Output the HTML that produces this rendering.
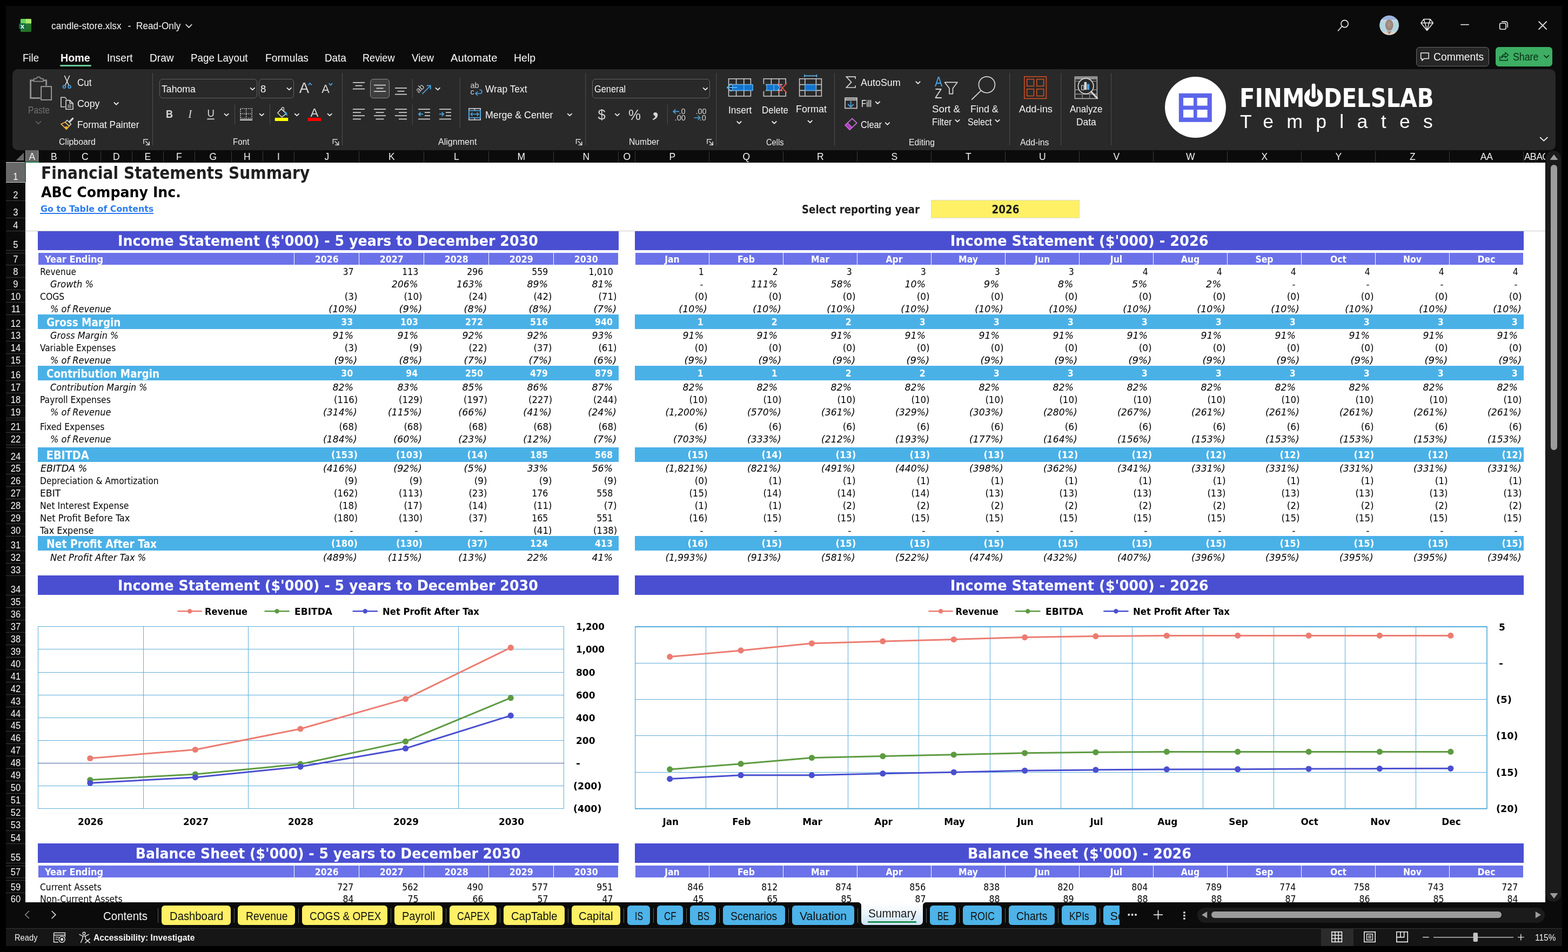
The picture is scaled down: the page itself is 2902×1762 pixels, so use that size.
<!DOCTYPE html>
<html lang="en"><head><meta charset="utf-8"><title>candle-store.xlsx - Excel</title>
<style>
html,body{margin:0;padding:0;background:#000;}
body{width:2902px;height:1762px;position:relative;overflow:hidden;font-family:"Liberation Sans",sans-serif;}
#app div,#app svg{position:absolute;}
#app div{white-space:nowrap;}
#app svg{overflow:visible;}
#app .v{font-family:"DejaVu Sans","Liberation Sans",sans-serif;}
#app .s{font-family:"Liberation Serif",serif;}
#app .d{font-family:"DejaVu Sans Condensed","DejaVu Sans","Liberation Sans",sans-serif;}
#app{position:absolute;left:0;top:0;width:2902px;height:1762px;overflow:hidden;background:#000;will-change:transform;}
#sheet{left:0;top:0;width:2860px;height:1670px;overflow:hidden;}
</style></head>
<body><div id="app">
<div style="left:11px;top:11px;width:2880px;height:1740px;background:#0b0b0b;"></div>
<div style="left:95.30px;top:39.00px;font-size:18.2px;line-height:18.2px;color:#f5f5f5;transform:scaleX(0.9491);transform-origin:left center;">candle-store.xlsx</div>
<div style="left:236.50px;top:39.00px;font-size:18.2px;line-height:18.2px;color:#f5f5f5;">-</div>
<div style="left:252.40px;top:39.00px;font-size:18.2px;line-height:18.2px;color:#f5f5f5;transform:scaleX(0.9472);transform-origin:left center;">Read-Only</div>
<div style="left:2621px;top:87px;width:135px;height:36px;background:#262626;border:1px solid #686868;border-radius:6px;box-sizing:border-box;"></div>
<div style="left:2652.60px;top:96.00px;font-size:19.4px;line-height:19.4px;color:#f5f5f5;transform:scaleX(0.9937);transform-origin:left center;">Comments</div>
<div style="left:2768px;top:87px;width:105px;height:36px;background:#3dae63;border-radius:6px;"></div>
<div style="left:2800.00px;top:96.00px;font-size:19.4px;line-height:19.4px;color:#0c2c17;transform:scaleX(0.9156);transform-origin:left center;">Share</div>
<div style="left:41.80px;top:97.00px;font-size:20.4px;line-height:20.4px;color:#fbfbfb;transform:scaleX(0.9126);transform-origin:left center;">File</div>
<div style="left:111.60px;top:97.00px;font-size:20.4px;line-height:20.4px;color:#fbfbfb;font-weight:700;transform:scaleX(0.9669);transform-origin:left center;">Home</div>
<div style="left:198.00px;top:97.00px;font-size:20.4px;line-height:20.4px;color:#fbfbfb;transform:scaleX(0.9310);transform-origin:left center;">Insert</div>
<div style="left:277.20px;top:97.00px;font-size:20.4px;line-height:20.4px;color:#fbfbfb;transform:scaleX(0.9369);transform-origin:left center;">Draw</div>
<div style="left:353.00px;top:97.00px;font-size:20.4px;line-height:20.4px;color:#fbfbfb;transform:scaleX(0.9218);transform-origin:left center;">Page Layout</div>
<div style="left:491.00px;top:97.00px;font-size:20.4px;line-height:20.4px;color:#fbfbfb;transform:scaleX(0.9410);transform-origin:left center;">Formulas</div>
<div style="left:600.60px;top:97.00px;font-size:20.4px;line-height:20.4px;color:#fbfbfb;transform:scaleX(0.9236);transform-origin:left center;">Data</div>
<div style="left:670.90px;top:97.00px;font-size:20.4px;line-height:20.4px;color:#fbfbfb;transform:scaleX(0.8910);transform-origin:left center;">Review</div>
<div style="left:761.80px;top:97.00px;font-size:20.4px;line-height:20.4px;color:#fbfbfb;transform:scaleX(0.9350);transform-origin:left center;">View</div>
<div style="left:834.00px;top:97.00px;font-size:20.4px;line-height:20.4px;color:#fbfbfb;transform:scaleX(0.9906);transform-origin:left center;">Automate</div>
<div style="left:950.90px;top:97.00px;font-size:20.4px;line-height:20.4px;color:#fbfbfb;transform:scaleX(0.9558);transform-origin:left center;">Help</div>
<div style="left:111px;top:120px;width:58px;height:3.2px;background:#67c796;border-radius:2px;"></div>
<div id="sheet"><div style="left:47px;top:301px;width:2813px;height:1369px;background:#fff;"></div>
<div style="left:47px;top:427px;width:2813px;height:1px;background:#c9c9c9;"></div>
<div class="d" style="left:76.20px;top:305.00px;font-size:31.7px;line-height:31.7px;color:#1f1f1f;font-weight:700;transform:scaleX(0.9887);transform-origin:left center;">Financial Statements Summary</div>
<div class="d" style="left:76.40px;top:344.00px;font-size:25.9px;line-height:25.9px;color:#000;font-weight:700;transform:scaleX(1.0855);transform-origin:left center;">ABC Company Inc.</div>
<div class="d" style="left:74.60px;top:378.00px;font-size:16.7px;line-height:16.7px;color:#2b7cf0;font-weight:700;transform:scaleX(1.0549);transform-origin:left center;">Go to Table of Contents</div>
<div style="left:74.4px;top:394px;width:209.8px;height:2px;background:#2b7cf0;"></div>
<div class="d" style="left:1483.60px;top:377.00px;font-size:21.6px;line-height:21.6px;color:#1f1f1f;font-weight:700;transform:scaleX(0.9348);transform-origin:left center;">Select reporting year</div>
<div style="left:1723px;top:370px;width:275px;height:34px;background:#fff066;border:1px solid #d9d9d9;box-sizing:border-box;"></div>
<div class="d" style="left:1833.96px;top:377.00px;font-size:21.6px;line-height:21.6px;color:#1a1a1a;font-weight:700;transform:scaleX(0.9430);transform-origin:center center;">2026</div>
<div style="left:70px;top:428px;width:1075px;height:35px;background:#4a4fd2;"></div>
<div style="left:1175px;top:428px;width:1645px;height:35px;background:#4a4fd2;"></div>
<div class="d" style="left:240.28px;top:433.00px;font-size:26.6px;line-height:26.6px;color:#fff;font-weight:700;transform:scaleX(1.0599);transform-origin:center center;">Income Statement ($'000) - 5 years to December 2030</div>
<div class="d" style="left:1775.23px;top:433.00px;font-size:26.6px;line-height:26.6px;color:#fff;font-weight:700;transform:scaleX(1.0729);transform-origin:center center;">Income Statement ($'000) - 2026</div>
<div style="left:70px;top:1065.4px;width:1075px;height:35.6px;background:#4a4fd2;"></div>
<div style="left:1175px;top:1065.4px;width:1645px;height:35.6px;background:#4a4fd2;"></div>
<div class="d" style="left:240.28px;top:1071.00px;font-size:26.6px;line-height:26.6px;color:#fff;font-weight:700;transform:scaleX(1.0599);transform-origin:center center;">Income Statement ($'000) - 5 years to December 2030</div>
<div class="d" style="left:1775.23px;top:1071.00px;font-size:26.6px;line-height:26.6px;color:#fff;font-weight:700;transform:scaleX(1.0729);transform-origin:center center;">Income Statement ($'000) - 2026</div>
<div style="left:70px;top:1561.4px;width:1075px;height:35.6px;background:#4a4fd2;"></div>
<div style="left:1175px;top:1561.4px;width:1645px;height:35.6px;background:#4a4fd2;"></div>
<div class="d" style="left:268.04px;top:1567.00px;font-size:26.6px;line-height:26.6px;color:#fff;font-weight:700;transform:scaleX(1.0508);transform-origin:center center;">Balance Sheet ($'000) - 5 years to December 2030</div>
<div class="d" style="left:1802.99px;top:1567.00px;font-size:26.6px;line-height:26.6px;color:#fff;font-weight:700;transform:scaleX(1.0615);transform-origin:center center;">Balance Sheet ($'000) - 2026</div>
<div style="left:71px;top:468px;width:473px;height:22px;background:#6b72e9;"></div>
<div class="d" style="left:82.50px;top:472.00px;font-size:17.4px;line-height:17.4px;color:#fff;font-weight:700;transform:scaleX(1.0300);transform-origin:left center;">Year Ending</div>
<div style="left:545px;top:468px;width:119px;height:22px;background:#6b72e9;"></div>
<div class="d" style="left:583.32px;top:472.00px;font-size:17.4px;line-height:17.4px;color:#fff;font-weight:700;transform:scaleX(1.0099);transform-origin:center center;">2026</div>
<div style="left:665px;top:468px;width:119px;height:22px;background:#6b72e9;"></div>
<div class="d" style="left:703.32px;top:472.00px;font-size:17.4px;line-height:17.4px;color:#fff;font-weight:700;transform:scaleX(1.0099);transform-origin:center center;">2027</div>
<div style="left:785px;top:468px;width:119px;height:22px;background:#6b72e9;"></div>
<div class="d" style="left:823.32px;top:472.00px;font-size:17.4px;line-height:17.4px;color:#fff;font-weight:700;transform:scaleX(1.0099);transform-origin:center center;">2028</div>
<div style="left:905px;top:468px;width:119px;height:22px;background:#6b72e9;"></div>
<div class="d" style="left:943.32px;top:472.00px;font-size:17.4px;line-height:17.4px;color:#fff;font-weight:700;transform:scaleX(1.0099);transform-origin:center center;">2029</div>
<div style="left:1025px;top:468px;width:119px;height:22px;background:#6b72e9;"></div>
<div class="d" style="left:1063.32px;top:472.00px;font-size:17.4px;line-height:17.4px;color:#fff;font-weight:700;transform:scaleX(1.0099);transform-origin:center center;">2030</div>
<div style="left:1176px;top:468px;width:135.5px;height:22px;background:#6b72e9;"></div>
<div class="d" style="left:1230.24px;top:472.00px;font-size:17.4px;line-height:17.4px;color:#fff;font-weight:700;">Jan</div>
<div style="left:1313px;top:468px;width:135.5px;height:22px;background:#6b72e9;"></div>
<div class="d" style="left:1365.09px;top:472.00px;font-size:17.4px;line-height:17.4px;color:#fff;font-weight:700;">Feb</div>
<div style="left:1450px;top:468px;width:135.5px;height:22px;background:#6b72e9;"></div>
<div class="d" style="left:1501.07px;top:472.00px;font-size:17.4px;line-height:17.4px;color:#fff;font-weight:700;">Mar</div>
<div style="left:1587px;top:468px;width:135.5px;height:22px;background:#6b72e9;"></div>
<div class="d" style="left:1639.48px;top:472.00px;font-size:17.4px;line-height:17.4px;color:#fff;font-weight:700;">Apr</div>
<div style="left:1724px;top:468px;width:135.5px;height:22px;background:#6b72e9;"></div>
<div class="d" style="left:1774.09px;top:472.00px;font-size:17.4px;line-height:17.4px;color:#fff;font-weight:700;">May</div>
<div style="left:1861px;top:468px;width:135.5px;height:22px;background:#6b72e9;"></div>
<div class="d" style="left:1914.94px;top:472.00px;font-size:17.4px;line-height:17.4px;color:#fff;font-weight:700;">Jun</div>
<div style="left:1998px;top:468px;width:135.5px;height:22px;background:#6b72e9;"></div>
<div class="d" style="left:2054.84px;top:472.00px;font-size:17.4px;line-height:17.4px;color:#fff;font-weight:700;">Jul</div>
<div style="left:2135px;top:468px;width:135.5px;height:22px;background:#6b72e9;"></div>
<div class="d" style="left:2185.77px;top:472.00px;font-size:17.4px;line-height:17.4px;color:#fff;font-weight:700;">Aug</div>
<div style="left:2272px;top:468px;width:135.5px;height:22px;background:#6b72e9;"></div>
<div class="d" style="left:2323.45px;top:472.00px;font-size:17.4px;line-height:17.4px;color:#fff;font-weight:700;">Sep</div>
<div style="left:2409px;top:468px;width:135.5px;height:22px;background:#6b72e9;"></div>
<div class="d" style="left:2461.97px;top:472.00px;font-size:17.4px;line-height:17.4px;color:#fff;font-weight:700;">Oct</div>
<div style="left:2546px;top:468px;width:135.5px;height:22px;background:#6b72e9;"></div>
<div class="d" style="left:2596.97px;top:472.00px;font-size:17.4px;line-height:17.4px;color:#fff;font-weight:700;">Nov</div>
<div style="left:2683px;top:468px;width:135.5px;height:22px;background:#6b72e9;"></div>
<div class="d" style="left:2734.55px;top:472.00px;font-size:17.4px;line-height:17.4px;color:#fff;font-weight:700;">Dec</div>
<div style="left:71px;top:1602px;width:473px;height:22px;background:#6b72e9;"></div>
<div class="d" style="left:82.50px;top:1606.00px;font-size:17.4px;line-height:17.4px;color:#fff;font-weight:700;transform:scaleX(1.0300);transform-origin:left center;">Year Ending</div>
<div style="left:545px;top:1602px;width:119px;height:22px;background:#6b72e9;"></div>
<div class="d" style="left:583.32px;top:1606.00px;font-size:17.4px;line-height:17.4px;color:#fff;font-weight:700;transform:scaleX(1.0099);transform-origin:center center;">2026</div>
<div style="left:665px;top:1602px;width:119px;height:22px;background:#6b72e9;"></div>
<div class="d" style="left:703.32px;top:1606.00px;font-size:17.4px;line-height:17.4px;color:#fff;font-weight:700;transform:scaleX(1.0099);transform-origin:center center;">2027</div>
<div style="left:785px;top:1602px;width:119px;height:22px;background:#6b72e9;"></div>
<div class="d" style="left:823.32px;top:1606.00px;font-size:17.4px;line-height:17.4px;color:#fff;font-weight:700;transform:scaleX(1.0099);transform-origin:center center;">2028</div>
<div style="left:905px;top:1602px;width:119px;height:22px;background:#6b72e9;"></div>
<div class="d" style="left:943.32px;top:1606.00px;font-size:17.4px;line-height:17.4px;color:#fff;font-weight:700;transform:scaleX(1.0099);transform-origin:center center;">2029</div>
<div style="left:1025px;top:1602px;width:119px;height:22px;background:#6b72e9;"></div>
<div class="d" style="left:1063.32px;top:1606.00px;font-size:17.4px;line-height:17.4px;color:#fff;font-weight:700;transform:scaleX(1.0099);transform-origin:center center;">2030</div>
<div style="left:1176px;top:1602px;width:135.5px;height:22px;background:#6b72e9;"></div>
<div class="d" style="left:1230.24px;top:1606.00px;font-size:17.4px;line-height:17.4px;color:#fff;font-weight:700;">Jan</div>
<div style="left:1313px;top:1602px;width:135.5px;height:22px;background:#6b72e9;"></div>
<div class="d" style="left:1365.09px;top:1606.00px;font-size:17.4px;line-height:17.4px;color:#fff;font-weight:700;">Feb</div>
<div style="left:1450px;top:1602px;width:135.5px;height:22px;background:#6b72e9;"></div>
<div class="d" style="left:1501.07px;top:1606.00px;font-size:17.4px;line-height:17.4px;color:#fff;font-weight:700;">Mar</div>
<div style="left:1587px;top:1602px;width:135.5px;height:22px;background:#6b72e9;"></div>
<div class="d" style="left:1639.48px;top:1606.00px;font-size:17.4px;line-height:17.4px;color:#fff;font-weight:700;">Apr</div>
<div style="left:1724px;top:1602px;width:135.5px;height:22px;background:#6b72e9;"></div>
<div class="d" style="left:1774.09px;top:1606.00px;font-size:17.4px;line-height:17.4px;color:#fff;font-weight:700;">May</div>
<div style="left:1861px;top:1602px;width:135.5px;height:22px;background:#6b72e9;"></div>
<div class="d" style="left:1914.94px;top:1606.00px;font-size:17.4px;line-height:17.4px;color:#fff;font-weight:700;">Jun</div>
<div style="left:1998px;top:1602px;width:135.5px;height:22px;background:#6b72e9;"></div>
<div class="d" style="left:2054.84px;top:1606.00px;font-size:17.4px;line-height:17.4px;color:#fff;font-weight:700;">Jul</div>
<div style="left:2135px;top:1602px;width:135.5px;height:22px;background:#6b72e9;"></div>
<div class="d" style="left:2185.77px;top:1606.00px;font-size:17.4px;line-height:17.4px;color:#fff;font-weight:700;">Aug</div>
<div style="left:2272px;top:1602px;width:135.5px;height:22px;background:#6b72e9;"></div>
<div class="d" style="left:2323.45px;top:1606.00px;font-size:17.4px;line-height:17.4px;color:#fff;font-weight:700;">Sep</div>
<div style="left:2409px;top:1602px;width:135.5px;height:22px;background:#6b72e9;"></div>
<div class="d" style="left:2461.97px;top:1606.00px;font-size:17.4px;line-height:17.4px;color:#fff;font-weight:700;">Oct</div>
<div style="left:2546px;top:1602px;width:135.5px;height:22px;background:#6b72e9;"></div>
<div class="d" style="left:2596.97px;top:1606.00px;font-size:17.4px;line-height:17.4px;color:#fff;font-weight:700;">Nov</div>
<div style="left:2683px;top:1602px;width:135.5px;height:22px;background:#6b72e9;"></div>
<div class="d" style="left:2734.55px;top:1606.00px;font-size:17.4px;line-height:17.4px;color:#fff;font-weight:700;">Dec</div>
<div class="d" style="left:74.25px;top:495.00px;font-size:17px;line-height:17px;color:#000;">Revenue</div>
<div class="d" style="left:634.94px;top:495.00px;font-size:17px;line-height:17px;color:#000;transform:scaleX(1.0279);transform-origin:right center;">37</div>
<div class="d" style="left:745.21px;top:495.00px;font-size:17px;line-height:17px;color:#000;transform:scaleX(1.0279);transform-origin:right center;">113</div>
<div class="d" style="left:865.21px;top:495.00px;font-size:17px;line-height:17px;color:#000;transform:scaleX(1.0279);transform-origin:right center;">296</div>
<div class="d" style="left:985.21px;top:495.00px;font-size:17px;line-height:17px;color:#000;transform:scaleX(1.0279);transform-origin:right center;">559</div>
<div class="d" style="left:1090.63px;top:495.00px;font-size:17px;line-height:17px;color:#000;transform:scaleX(1.0327);transform-origin:right center;">1,010</div>
<div class="d" style="left:1292.67px;top:495.00px;font-size:17px;line-height:17px;color:#000;transform:scaleX(1.0279);transform-origin:right center;">1</div>
<div class="d" style="left:1429.67px;top:495.00px;font-size:17px;line-height:17px;color:#000;transform:scaleX(1.0279);transform-origin:right center;">2</div>
<div class="d" style="left:1566.67px;top:495.00px;font-size:17px;line-height:17px;color:#000;transform:scaleX(1.0279);transform-origin:right center;">3</div>
<div class="d" style="left:1703.67px;top:495.00px;font-size:17px;line-height:17px;color:#000;transform:scaleX(1.0279);transform-origin:right center;">3</div>
<div class="d" style="left:1840.67px;top:495.00px;font-size:17px;line-height:17px;color:#000;transform:scaleX(1.0279);transform-origin:right center;">3</div>
<div class="d" style="left:1977.67px;top:495.00px;font-size:17px;line-height:17px;color:#000;transform:scaleX(1.0279);transform-origin:right center;">3</div>
<div class="d" style="left:2114.67px;top:495.00px;font-size:17px;line-height:17px;color:#000;transform:scaleX(1.0279);transform-origin:right center;">4</div>
<div class="d" style="left:2251.67px;top:495.00px;font-size:17px;line-height:17px;color:#000;transform:scaleX(1.0279);transform-origin:right center;">4</div>
<div class="d" style="left:2388.67px;top:495.00px;font-size:17px;line-height:17px;color:#000;transform:scaleX(1.0279);transform-origin:right center;">4</div>
<div class="d" style="left:2525.67px;top:495.00px;font-size:17px;line-height:17px;color:#000;transform:scaleX(1.0279);transform-origin:right center;">4</div>
<div class="d" style="left:2662.67px;top:495.00px;font-size:17px;line-height:17px;color:#000;transform:scaleX(1.0279);transform-origin:right center;">4</div>
<div class="d" style="left:2799.67px;top:495.00px;font-size:17px;line-height:17px;color:#000;transform:scaleX(1.0279);transform-origin:right center;">4</div>
<div class="d" style="left:92.50px;top:518.00px;font-size:17px;line-height:17px;color:#000;font-style:italic;transform:scaleX(1.0655);transform-origin:left center;">Growth %</div>

<div class="d" style="left:729.78px;top:518.00px;font-size:17px;line-height:17px;color:#000;font-style:italic;transform:scaleX(1.1116);transform-origin:right center;">206%</div>
<div class="d" style="left:849.78px;top:518.00px;font-size:17px;line-height:17px;color:#000;font-style:italic;transform:scaleX(1.1116);transform-origin:right center;">163%</div>
<div class="d" style="left:979.51px;top:518.00px;font-size:17px;line-height:17px;color:#000;font-style:italic;transform:scaleX(1.1356);transform-origin:right center;">89%</div>
<div class="d" style="left:1099.51px;top:518.00px;font-size:17px;line-height:17px;color:#000;font-style:italic;transform:scaleX(1.1356);transform-origin:right center;">81%</div>
<div class="d" style="left:1295.58px;top:518.00px;font-size:17px;line-height:17px;color:#000;font-style:italic;transform:scaleX(1.1413);transform-origin:right center;">-</div>
<div class="d" style="left:1394.78px;top:518.00px;font-size:17px;line-height:17px;color:#000;font-style:italic;transform:scaleX(1.1116);transform-origin:right center;">111%</div>
<div class="d" style="left:1541.51px;top:518.00px;font-size:17px;line-height:17px;color:#000;font-style:italic;transform:scaleX(1.1356);transform-origin:right center;">58%</div>
<div class="d" style="left:1678.51px;top:518.00px;font-size:17px;line-height:17px;color:#000;font-style:italic;transform:scaleX(1.1356);transform-origin:right center;">10%</div>
<div class="d" style="left:1825.24px;top:518.00px;font-size:17px;line-height:17px;color:#000;font-style:italic;transform:scaleX(1.1787);transform-origin:right center;">9%</div>
<div class="d" style="left:1962.24px;top:518.00px;font-size:17px;line-height:17px;color:#000;font-style:italic;transform:scaleX(1.1787);transform-origin:right center;">8%</div>
<div class="d" style="left:2099.24px;top:518.00px;font-size:17px;line-height:17px;color:#000;font-style:italic;transform:scaleX(1.1787);transform-origin:right center;">5%</div>
<div class="d" style="left:2236.24px;top:518.00px;font-size:17px;line-height:17px;color:#000;font-style:italic;transform:scaleX(1.1787);transform-origin:right center;">2%</div>
<div class="d" style="left:2391.58px;top:518.00px;font-size:17px;line-height:17px;color:#000;font-style:italic;transform:scaleX(1.1413);transform-origin:right center;">-</div>
<div class="d" style="left:2528.58px;top:518.00px;font-size:17px;line-height:17px;color:#000;font-style:italic;transform:scaleX(1.1413);transform-origin:right center;">-</div>
<div class="d" style="left:2665.58px;top:518.00px;font-size:17px;line-height:17px;color:#000;font-style:italic;transform:scaleX(1.1413);transform-origin:right center;">-</div>
<div class="d" style="left:2802.58px;top:518.00px;font-size:17px;line-height:17px;color:#000;font-style:italic;transform:scaleX(1.1413);transform-origin:right center;">-</div>
<div class="d" style="left:74.25px;top:541.00px;font-size:17px;line-height:17px;color:#000;transform:scaleX(1.0218);transform-origin:left center;">COGS</div>
<div class="d" style="left:640.13px;top:541.00px;font-size:17px;line-height:17px;color:#000;transform:scaleX(1.1078);transform-origin:right center;">(3)</div>
<div class="d" style="left:750.41px;top:541.00px;font-size:17px;line-height:17px;color:#000;transform:scaleX(1.0830);transform-origin:right center;">(10)</div>
<div class="d" style="left:870.41px;top:541.00px;font-size:17px;line-height:17px;color:#000;transform:scaleX(1.0830);transform-origin:right center;">(24)</div>
<div class="d" style="left:990.41px;top:541.00px;font-size:17px;line-height:17px;color:#000;transform:scaleX(1.0830);transform-origin:right center;">(42)</div>
<div class="d" style="left:1110.41px;top:541.00px;font-size:17px;line-height:17px;color:#000;transform:scaleX(1.0830);transform-origin:right center;">(71)</div>
<div class="d" style="left:1288.13px;top:541.00px;font-size:17px;line-height:17px;color:#000;transform:scaleX(1.1078);transform-origin:right center;">(0)</div>
<div class="d" style="left:1425.13px;top:541.00px;font-size:17px;line-height:17px;color:#000;transform:scaleX(1.1078);transform-origin:right center;">(0)</div>
<div class="d" style="left:1562.13px;top:541.00px;font-size:17px;line-height:17px;color:#000;transform:scaleX(1.1078);transform-origin:right center;">(0)</div>
<div class="d" style="left:1699.13px;top:541.00px;font-size:17px;line-height:17px;color:#000;transform:scaleX(1.1078);transform-origin:right center;">(0)</div>
<div class="d" style="left:1836.13px;top:541.00px;font-size:17px;line-height:17px;color:#000;transform:scaleX(1.1078);transform-origin:right center;">(0)</div>
<div class="d" style="left:1973.13px;top:541.00px;font-size:17px;line-height:17px;color:#000;transform:scaleX(1.1078);transform-origin:right center;">(0)</div>
<div class="d" style="left:2110.13px;top:541.00px;font-size:17px;line-height:17px;color:#000;transform:scaleX(1.1078);transform-origin:right center;">(0)</div>
<div class="d" style="left:2247.13px;top:541.00px;font-size:17px;line-height:17px;color:#000;transform:scaleX(1.1078);transform-origin:right center;">(0)</div>
<div class="d" style="left:2384.13px;top:541.00px;font-size:17px;line-height:17px;color:#000;transform:scaleX(1.1078);transform-origin:right center;">(0)</div>
<div class="d" style="left:2521.13px;top:541.00px;font-size:17px;line-height:17px;color:#000;transform:scaleX(1.1078);transform-origin:right center;">(0)</div>
<div class="d" style="left:2658.13px;top:541.00px;font-size:17px;line-height:17px;color:#000;transform:scaleX(1.1078);transform-origin:right center;">(0)</div>
<div class="d" style="left:2795.13px;top:541.00px;font-size:17px;line-height:17px;color:#000;transform:scaleX(1.1078);transform-origin:right center;">(0)</div>
<div class="d" style="left:93.00px;top:564.00px;font-size:17px;line-height:17px;color:#000;font-style:italic;transform:scaleX(1.0585);transform-origin:left center;">% of Revenue</div>
<div class="d" style="left:614.87px;top:564.00px;font-size:17px;line-height:17px;color:#000;font-style:italic;transform:scaleX(1.1453);transform-origin:right center;">(10%)</div>
<div class="d" style="left:744.60px;top:564.00px;font-size:17px;line-height:17px;color:#000;font-style:italic;transform:scaleX(1.1768);transform-origin:right center;">(9%)</div>
<div class="d" style="left:864.60px;top:564.00px;font-size:17px;line-height:17px;color:#000;font-style:italic;transform:scaleX(1.1768);transform-origin:right center;">(8%)</div>
<div class="d" style="left:984.60px;top:564.00px;font-size:17px;line-height:17px;color:#000;font-style:italic;transform:scaleX(1.1768);transform-origin:right center;">(8%)</div>
<div class="d" style="left:1104.60px;top:564.00px;font-size:17px;line-height:17px;color:#000;font-style:italic;transform:scaleX(1.1768);transform-origin:right center;">(7%)</div>
<div class="d" style="left:1262.87px;top:564.00px;font-size:17px;line-height:17px;color:#000;font-style:italic;transform:scaleX(1.1453);transform-origin:right center;">(10%)</div>
<div class="d" style="left:1399.87px;top:564.00px;font-size:17px;line-height:17px;color:#000;font-style:italic;transform:scaleX(1.1453);transform-origin:right center;">(10%)</div>
<div class="d" style="left:1536.87px;top:564.00px;font-size:17px;line-height:17px;color:#000;font-style:italic;transform:scaleX(1.1453);transform-origin:right center;">(10%)</div>
<div class="d" style="left:1673.87px;top:564.00px;font-size:17px;line-height:17px;color:#000;font-style:italic;transform:scaleX(1.1453);transform-origin:right center;">(10%)</div>
<div class="d" style="left:1810.87px;top:564.00px;font-size:17px;line-height:17px;color:#000;font-style:italic;transform:scaleX(1.1453);transform-origin:right center;">(10%)</div>
<div class="d" style="left:1947.87px;top:564.00px;font-size:17px;line-height:17px;color:#000;font-style:italic;transform:scaleX(1.1453);transform-origin:right center;">(10%)</div>
<div class="d" style="left:2084.87px;top:564.00px;font-size:17px;line-height:17px;color:#000;font-style:italic;transform:scaleX(1.1453);transform-origin:right center;">(10%)</div>
<div class="d" style="left:2221.87px;top:564.00px;font-size:17px;line-height:17px;color:#000;font-style:italic;transform:scaleX(1.1453);transform-origin:right center;">(10%)</div>
<div class="d" style="left:2358.87px;top:564.00px;font-size:17px;line-height:17px;color:#000;font-style:italic;transform:scaleX(1.1453);transform-origin:right center;">(10%)</div>
<div class="d" style="left:2495.87px;top:564.00px;font-size:17px;line-height:17px;color:#000;font-style:italic;transform:scaleX(1.1453);transform-origin:right center;">(10%)</div>
<div class="d" style="left:2632.87px;top:564.00px;font-size:17px;line-height:17px;color:#000;font-style:italic;transform:scaleX(1.1453);transform-origin:right center;">(10%)</div>
<div class="d" style="left:2769.87px;top:564.00px;font-size:17px;line-height:17px;color:#000;font-style:italic;transform:scaleX(1.1453);transform-origin:right center;">(10%)</div>
<div style="left:70px;top:582px;width:1075px;height:27px;background:#4ab1e7;"></div>
<div style="left:1175px;top:582px;width:1645px;height:27px;background:#4ab1e7;"></div>
<div class="d" style="left:85.75px;top:586.00px;font-size:21.4px;line-height:21.4px;color:#fff;font-weight:700;transform:scaleX(0.9556);transform-origin:left center;">Gross Margin</div>
<div class="d" style="left:632.42px;top:588.00px;font-size:17px;line-height:17px;color:#fff;font-weight:700;transform:scaleX(1.0337);transform-origin:right center;">33</div>
<div class="d" style="left:741.77px;top:588.00px;font-size:17px;line-height:17px;color:#fff;font-weight:700;transform:scaleX(1.0337);transform-origin:right center;">103</div>
<div class="d" style="left:861.77px;top:588.00px;font-size:17px;line-height:17px;color:#fff;font-weight:700;transform:scaleX(1.0337);transform-origin:right center;">272</div>
<div class="d" style="left:981.77px;top:588.00px;font-size:17px;line-height:17px;color:#fff;font-weight:700;transform:scaleX(1.0337);transform-origin:right center;">516</div>
<div class="d" style="left:1101.77px;top:588.00px;font-size:17px;line-height:17px;color:#fff;font-weight:700;transform:scaleX(1.0337);transform-origin:right center;">940</div>
<div class="d" style="left:1291.06px;top:588.00px;font-size:17px;line-height:17px;color:#fff;font-weight:700;transform:scaleX(1.0337);transform-origin:right center;">1</div>
<div class="d" style="left:1428.06px;top:588.00px;font-size:17px;line-height:17px;color:#fff;font-weight:700;transform:scaleX(1.0337);transform-origin:right center;">2</div>
<div class="d" style="left:1565.06px;top:588.00px;font-size:17px;line-height:17px;color:#fff;font-weight:700;transform:scaleX(1.0337);transform-origin:right center;">2</div>
<div class="d" style="left:1702.06px;top:588.00px;font-size:17px;line-height:17px;color:#fff;font-weight:700;transform:scaleX(1.0337);transform-origin:right center;">3</div>
<div class="d" style="left:1839.06px;top:588.00px;font-size:17px;line-height:17px;color:#fff;font-weight:700;transform:scaleX(1.0337);transform-origin:right center;">3</div>
<div class="d" style="left:1976.06px;top:588.00px;font-size:17px;line-height:17px;color:#fff;font-weight:700;transform:scaleX(1.0337);transform-origin:right center;">3</div>
<div class="d" style="left:2113.06px;top:588.00px;font-size:17px;line-height:17px;color:#fff;font-weight:700;transform:scaleX(1.0337);transform-origin:right center;">3</div>
<div class="d" style="left:2250.06px;top:588.00px;font-size:17px;line-height:17px;color:#fff;font-weight:700;transform:scaleX(1.0337);transform-origin:right center;">3</div>
<div class="d" style="left:2387.06px;top:588.00px;font-size:17px;line-height:17px;color:#fff;font-weight:700;transform:scaleX(1.0337);transform-origin:right center;">3</div>
<div class="d" style="left:2524.06px;top:588.00px;font-size:17px;line-height:17px;color:#fff;font-weight:700;transform:scaleX(1.0337);transform-origin:right center;">3</div>
<div class="d" style="left:2661.06px;top:588.00px;font-size:17px;line-height:17px;color:#fff;font-weight:700;transform:scaleX(1.0337);transform-origin:right center;">3</div>
<div class="d" style="left:2798.06px;top:588.00px;font-size:17px;line-height:17px;color:#fff;font-weight:700;transform:scaleX(1.0337);transform-origin:right center;">3</div>
<div class="d" style="left:92.50px;top:613.00px;font-size:17px;line-height:17px;color:#000;font-style:italic;transform:scaleX(1.0504);transform-origin:left center;">Gross Margin %</div>
<div class="d" style="left:619.51px;top:613.00px;font-size:17px;line-height:17px;color:#000;font-style:italic;transform:scaleX(1.1356);transform-origin:right center;">91%</div>
<div class="d" style="left:739.51px;top:613.00px;font-size:17px;line-height:17px;color:#000;font-style:italic;transform:scaleX(1.1356);transform-origin:right center;">91%</div>
<div class="d" style="left:859.51px;top:613.00px;font-size:17px;line-height:17px;color:#000;font-style:italic;transform:scaleX(1.1356);transform-origin:right center;">92%</div>
<div class="d" style="left:979.51px;top:613.00px;font-size:17px;line-height:17px;color:#000;font-style:italic;transform:scaleX(1.1356);transform-origin:right center;">92%</div>
<div class="d" style="left:1099.51px;top:613.00px;font-size:17px;line-height:17px;color:#000;font-style:italic;transform:scaleX(1.1356);transform-origin:right center;">93%</div>
<div class="d" style="left:1267.51px;top:613.00px;font-size:17px;line-height:17px;color:#000;font-style:italic;transform:scaleX(1.1356);transform-origin:right center;">91%</div>
<div class="d" style="left:1404.51px;top:613.00px;font-size:17px;line-height:17px;color:#000;font-style:italic;transform:scaleX(1.1356);transform-origin:right center;">91%</div>
<div class="d" style="left:1541.51px;top:613.00px;font-size:17px;line-height:17px;color:#000;font-style:italic;transform:scaleX(1.1356);transform-origin:right center;">91%</div>
<div class="d" style="left:1678.51px;top:613.00px;font-size:17px;line-height:17px;color:#000;font-style:italic;transform:scaleX(1.1356);transform-origin:right center;">91%</div>
<div class="d" style="left:1815.51px;top:613.00px;font-size:17px;line-height:17px;color:#000;font-style:italic;transform:scaleX(1.1356);transform-origin:right center;">91%</div>
<div class="d" style="left:1952.51px;top:613.00px;font-size:17px;line-height:17px;color:#000;font-style:italic;transform:scaleX(1.1356);transform-origin:right center;">91%</div>
<div class="d" style="left:2089.51px;top:613.00px;font-size:17px;line-height:17px;color:#000;font-style:italic;transform:scaleX(1.1356);transform-origin:right center;">91%</div>
<div class="d" style="left:2226.51px;top:613.00px;font-size:17px;line-height:17px;color:#000;font-style:italic;transform:scaleX(1.1356);transform-origin:right center;">91%</div>
<div class="d" style="left:2363.51px;top:613.00px;font-size:17px;line-height:17px;color:#000;font-style:italic;transform:scaleX(1.1356);transform-origin:right center;">91%</div>
<div class="d" style="left:2500.51px;top:613.00px;font-size:17px;line-height:17px;color:#000;font-style:italic;transform:scaleX(1.1356);transform-origin:right center;">91%</div>
<div class="d" style="left:2637.51px;top:613.00px;font-size:17px;line-height:17px;color:#000;font-style:italic;transform:scaleX(1.1356);transform-origin:right center;">91%</div>
<div class="d" style="left:2774.51px;top:613.00px;font-size:17px;line-height:17px;color:#000;font-style:italic;transform:scaleX(1.1356);transform-origin:right center;">91%</div>
<div class="d" style="left:74.25px;top:636.00px;font-size:17px;line-height:17px;color:#000;transform:scaleX(1.0052);transform-origin:left center;">Variable Expenses</div>
<div class="d" style="left:640.13px;top:636.00px;font-size:17px;line-height:17px;color:#000;transform:scaleX(1.1078);transform-origin:right center;">(3)</div>
<div class="d" style="left:760.13px;top:636.00px;font-size:17px;line-height:17px;color:#000;transform:scaleX(1.1078);transform-origin:right center;">(9)</div>
<div class="d" style="left:870.41px;top:636.00px;font-size:17px;line-height:17px;color:#000;transform:scaleX(1.0830);transform-origin:right center;">(22)</div>
<div class="d" style="left:990.41px;top:636.00px;font-size:17px;line-height:17px;color:#000;transform:scaleX(1.0830);transform-origin:right center;">(37)</div>
<div class="d" style="left:1110.41px;top:636.00px;font-size:17px;line-height:17px;color:#000;transform:scaleX(1.0830);transform-origin:right center;">(61)</div>
<div class="d" style="left:1288.13px;top:636.00px;font-size:17px;line-height:17px;color:#000;transform:scaleX(1.1078);transform-origin:right center;">(0)</div>
<div class="d" style="left:1425.13px;top:636.00px;font-size:17px;line-height:17px;color:#000;transform:scaleX(1.1078);transform-origin:right center;">(0)</div>
<div class="d" style="left:1562.13px;top:636.00px;font-size:17px;line-height:17px;color:#000;transform:scaleX(1.1078);transform-origin:right center;">(0)</div>
<div class="d" style="left:1699.13px;top:636.00px;font-size:17px;line-height:17px;color:#000;transform:scaleX(1.1078);transform-origin:right center;">(0)</div>
<div class="d" style="left:1836.13px;top:636.00px;font-size:17px;line-height:17px;color:#000;transform:scaleX(1.1078);transform-origin:right center;">(0)</div>
<div class="d" style="left:1973.13px;top:636.00px;font-size:17px;line-height:17px;color:#000;transform:scaleX(1.1078);transform-origin:right center;">(0)</div>
<div class="d" style="left:2110.13px;top:636.00px;font-size:17px;line-height:17px;color:#000;transform:scaleX(1.1078);transform-origin:right center;">(0)</div>
<div class="d" style="left:2247.13px;top:636.00px;font-size:17px;line-height:17px;color:#000;transform:scaleX(1.1078);transform-origin:right center;">(0)</div>
<div class="d" style="left:2384.13px;top:636.00px;font-size:17px;line-height:17px;color:#000;transform:scaleX(1.1078);transform-origin:right center;">(0)</div>
<div class="d" style="left:2521.13px;top:636.00px;font-size:17px;line-height:17px;color:#000;transform:scaleX(1.1078);transform-origin:right center;">(0)</div>
<div class="d" style="left:2658.13px;top:636.00px;font-size:17px;line-height:17px;color:#000;transform:scaleX(1.1078);transform-origin:right center;">(0)</div>
<div class="d" style="left:2795.13px;top:636.00px;font-size:17px;line-height:17px;color:#000;transform:scaleX(1.1078);transform-origin:right center;">(0)</div>
<div class="d" style="left:93.00px;top:659.00px;font-size:17px;line-height:17px;color:#000;font-style:italic;transform:scaleX(1.0585);transform-origin:left center;">% of Revenue</div>
<div class="d" style="left:624.60px;top:659.00px;font-size:17px;line-height:17px;color:#000;font-style:italic;transform:scaleX(1.1768);transform-origin:right center;">(9%)</div>
<div class="d" style="left:744.60px;top:659.00px;font-size:17px;line-height:17px;color:#000;font-style:italic;transform:scaleX(1.1768);transform-origin:right center;">(8%)</div>
<div class="d" style="left:864.60px;top:659.00px;font-size:17px;line-height:17px;color:#000;font-style:italic;transform:scaleX(1.1768);transform-origin:right center;">(7%)</div>
<div class="d" style="left:984.60px;top:659.00px;font-size:17px;line-height:17px;color:#000;font-style:italic;transform:scaleX(1.1768);transform-origin:right center;">(7%)</div>
<div class="d" style="left:1104.60px;top:659.00px;font-size:17px;line-height:17px;color:#000;font-style:italic;transform:scaleX(1.1768);transform-origin:right center;">(6%)</div>
<div class="d" style="left:1272.60px;top:659.00px;font-size:17px;line-height:17px;color:#000;font-style:italic;transform:scaleX(1.1768);transform-origin:right center;">(9%)</div>
<div class="d" style="left:1409.60px;top:659.00px;font-size:17px;line-height:17px;color:#000;font-style:italic;transform:scaleX(1.1768);transform-origin:right center;">(9%)</div>
<div class="d" style="left:1546.60px;top:659.00px;font-size:17px;line-height:17px;color:#000;font-style:italic;transform:scaleX(1.1768);transform-origin:right center;">(9%)</div>
<div class="d" style="left:1683.60px;top:659.00px;font-size:17px;line-height:17px;color:#000;font-style:italic;transform:scaleX(1.1768);transform-origin:right center;">(9%)</div>
<div class="d" style="left:1820.60px;top:659.00px;font-size:17px;line-height:17px;color:#000;font-style:italic;transform:scaleX(1.1768);transform-origin:right center;">(9%)</div>
<div class="d" style="left:1957.60px;top:659.00px;font-size:17px;line-height:17px;color:#000;font-style:italic;transform:scaleX(1.1768);transform-origin:right center;">(9%)</div>
<div class="d" style="left:2094.60px;top:659.00px;font-size:17px;line-height:17px;color:#000;font-style:italic;transform:scaleX(1.1768);transform-origin:right center;">(9%)</div>
<div class="d" style="left:2231.60px;top:659.00px;font-size:17px;line-height:17px;color:#000;font-style:italic;transform:scaleX(1.1768);transform-origin:right center;">(9%)</div>
<div class="d" style="left:2368.60px;top:659.00px;font-size:17px;line-height:17px;color:#000;font-style:italic;transform:scaleX(1.1768);transform-origin:right center;">(9%)</div>
<div class="d" style="left:2505.60px;top:659.00px;font-size:17px;line-height:17px;color:#000;font-style:italic;transform:scaleX(1.1768);transform-origin:right center;">(9%)</div>
<div class="d" style="left:2642.60px;top:659.00px;font-size:17px;line-height:17px;color:#000;font-style:italic;transform:scaleX(1.1768);transform-origin:right center;">(9%)</div>
<div class="d" style="left:2779.60px;top:659.00px;font-size:17px;line-height:17px;color:#000;font-style:italic;transform:scaleX(1.1768);transform-origin:right center;">(9%)</div>
<div style="left:70px;top:677px;width:1075px;height:27px;background:#4ab1e7;"></div>
<div style="left:1175px;top:677px;width:1645px;height:27px;background:#4ab1e7;"></div>
<div class="d" style="left:85.75px;top:681.00px;font-size:21.4px;line-height:21.4px;color:#fff;font-weight:700;transform:scaleX(0.9554);transform-origin:left center;">Contribution Margin</div>
<div class="d" style="left:632.42px;top:683.00px;font-size:17px;line-height:17px;color:#fff;font-weight:700;transform:scaleX(1.0337);transform-origin:right center;">30</div>
<div class="d" style="left:752.42px;top:683.00px;font-size:17px;line-height:17px;color:#fff;font-weight:700;transform:scaleX(1.0337);transform-origin:right center;">94</div>
<div class="d" style="left:861.77px;top:683.00px;font-size:17px;line-height:17px;color:#fff;font-weight:700;transform:scaleX(1.0337);transform-origin:right center;">250</div>
<div class="d" style="left:981.77px;top:683.00px;font-size:17px;line-height:17px;color:#fff;font-weight:700;transform:scaleX(1.0337);transform-origin:right center;">479</div>
<div class="d" style="left:1101.77px;top:683.00px;font-size:17px;line-height:17px;color:#fff;font-weight:700;transform:scaleX(1.0337);transform-origin:right center;">879</div>
<div class="d" style="left:1291.06px;top:683.00px;font-size:17px;line-height:17px;color:#fff;font-weight:700;transform:scaleX(1.0337);transform-origin:right center;">1</div>
<div class="d" style="left:1428.06px;top:683.00px;font-size:17px;line-height:17px;color:#fff;font-weight:700;transform:scaleX(1.0337);transform-origin:right center;">1</div>
<div class="d" style="left:1565.06px;top:683.00px;font-size:17px;line-height:17px;color:#fff;font-weight:700;transform:scaleX(1.0337);transform-origin:right center;">2</div>
<div class="d" style="left:1702.06px;top:683.00px;font-size:17px;line-height:17px;color:#fff;font-weight:700;transform:scaleX(1.0337);transform-origin:right center;">2</div>
<div class="d" style="left:1839.06px;top:683.00px;font-size:17px;line-height:17px;color:#fff;font-weight:700;transform:scaleX(1.0337);transform-origin:right center;">3</div>
<div class="d" style="left:1976.06px;top:683.00px;font-size:17px;line-height:17px;color:#fff;font-weight:700;transform:scaleX(1.0337);transform-origin:right center;">3</div>
<div class="d" style="left:2113.06px;top:683.00px;font-size:17px;line-height:17px;color:#fff;font-weight:700;transform:scaleX(1.0337);transform-origin:right center;">3</div>
<div class="d" style="left:2250.06px;top:683.00px;font-size:17px;line-height:17px;color:#fff;font-weight:700;transform:scaleX(1.0337);transform-origin:right center;">3</div>
<div class="d" style="left:2387.06px;top:683.00px;font-size:17px;line-height:17px;color:#fff;font-weight:700;transform:scaleX(1.0337);transform-origin:right center;">3</div>
<div class="d" style="left:2524.06px;top:683.00px;font-size:17px;line-height:17px;color:#fff;font-weight:700;transform:scaleX(1.0337);transform-origin:right center;">3</div>
<div class="d" style="left:2661.06px;top:683.00px;font-size:17px;line-height:17px;color:#fff;font-weight:700;transform:scaleX(1.0337);transform-origin:right center;">3</div>
<div class="d" style="left:2798.06px;top:683.00px;font-size:17px;line-height:17px;color:#fff;font-weight:700;transform:scaleX(1.0337);transform-origin:right center;">3</div>
<div class="d" style="left:92.50px;top:709.00px;font-size:17px;line-height:17px;color:#000;font-style:italic;transform:scaleX(1.0453);transform-origin:left center;">Contribution Margin %</div>
<div class="d" style="left:619.51px;top:709.00px;font-size:17px;line-height:17px;color:#000;font-style:italic;transform:scaleX(1.1356);transform-origin:right center;">82%</div>
<div class="d" style="left:739.51px;top:709.00px;font-size:17px;line-height:17px;color:#000;font-style:italic;transform:scaleX(1.1356);transform-origin:right center;">83%</div>
<div class="d" style="left:859.51px;top:709.00px;font-size:17px;line-height:17px;color:#000;font-style:italic;transform:scaleX(1.1356);transform-origin:right center;">85%</div>
<div class="d" style="left:979.51px;top:709.00px;font-size:17px;line-height:17px;color:#000;font-style:italic;transform:scaleX(1.1356);transform-origin:right center;">86%</div>
<div class="d" style="left:1099.51px;top:709.00px;font-size:17px;line-height:17px;color:#000;font-style:italic;transform:scaleX(1.1356);transform-origin:right center;">87%</div>
<div class="d" style="left:1267.51px;top:709.00px;font-size:17px;line-height:17px;color:#000;font-style:italic;transform:scaleX(1.1356);transform-origin:right center;">82%</div>
<div class="d" style="left:1404.51px;top:709.00px;font-size:17px;line-height:17px;color:#000;font-style:italic;transform:scaleX(1.1356);transform-origin:right center;">82%</div>
<div class="d" style="left:1541.51px;top:709.00px;font-size:17px;line-height:17px;color:#000;font-style:italic;transform:scaleX(1.1356);transform-origin:right center;">82%</div>
<div class="d" style="left:1678.51px;top:709.00px;font-size:17px;line-height:17px;color:#000;font-style:italic;transform:scaleX(1.1356);transform-origin:right center;">82%</div>
<div class="d" style="left:1815.51px;top:709.00px;font-size:17px;line-height:17px;color:#000;font-style:italic;transform:scaleX(1.1356);transform-origin:right center;">82%</div>
<div class="d" style="left:1952.51px;top:709.00px;font-size:17px;line-height:17px;color:#000;font-style:italic;transform:scaleX(1.1356);transform-origin:right center;">82%</div>
<div class="d" style="left:2089.51px;top:709.00px;font-size:17px;line-height:17px;color:#000;font-style:italic;transform:scaleX(1.1356);transform-origin:right center;">82%</div>
<div class="d" style="left:2226.51px;top:709.00px;font-size:17px;line-height:17px;color:#000;font-style:italic;transform:scaleX(1.1356);transform-origin:right center;">82%</div>
<div class="d" style="left:2363.51px;top:709.00px;font-size:17px;line-height:17px;color:#000;font-style:italic;transform:scaleX(1.1356);transform-origin:right center;">82%</div>
<div class="d" style="left:2500.51px;top:709.00px;font-size:17px;line-height:17px;color:#000;font-style:italic;transform:scaleX(1.1356);transform-origin:right center;">82%</div>
<div class="d" style="left:2637.51px;top:709.00px;font-size:17px;line-height:17px;color:#000;font-style:italic;transform:scaleX(1.1356);transform-origin:right center;">82%</div>
<div class="d" style="left:2774.51px;top:709.00px;font-size:17px;line-height:17px;color:#000;font-style:italic;transform:scaleX(1.1356);transform-origin:right center;">82%</div>
<div class="d" style="left:74.25px;top:732.00px;font-size:17px;line-height:17px;color:#000;transform:scaleX(1.0185);transform-origin:left center;">Payroll Expenses</div>
<div class="d" style="left:620.68px;top:732.00px;font-size:17px;line-height:17px;color:#000;transform:scaleX(1.0700);transform-origin:right center;">(116)</div>
<div class="d" style="left:740.68px;top:732.00px;font-size:17px;line-height:17px;color:#000;transform:scaleX(1.0700);transform-origin:right center;">(129)</div>
<div class="d" style="left:860.68px;top:732.00px;font-size:17px;line-height:17px;color:#000;transform:scaleX(1.0700);transform-origin:right center;">(197)</div>
<div class="d" style="left:980.68px;top:732.00px;font-size:17px;line-height:17px;color:#000;transform:scaleX(1.0700);transform-origin:right center;">(227)</div>
<div class="d" style="left:1100.68px;top:732.00px;font-size:17px;line-height:17px;color:#000;transform:scaleX(1.0700);transform-origin:right center;">(244)</div>
<div class="d" style="left:1278.41px;top:732.00px;font-size:17px;line-height:17px;color:#000;transform:scaleX(1.0830);transform-origin:right center;">(10)</div>
<div class="d" style="left:1415.41px;top:732.00px;font-size:17px;line-height:17px;color:#000;transform:scaleX(1.0830);transform-origin:right center;">(10)</div>
<div class="d" style="left:1552.41px;top:732.00px;font-size:17px;line-height:17px;color:#000;transform:scaleX(1.0830);transform-origin:right center;">(10)</div>
<div class="d" style="left:1689.41px;top:732.00px;font-size:17px;line-height:17px;color:#000;transform:scaleX(1.0830);transform-origin:right center;">(10)</div>
<div class="d" style="left:1826.41px;top:732.00px;font-size:17px;line-height:17px;color:#000;transform:scaleX(1.0830);transform-origin:right center;">(10)</div>
<div class="d" style="left:1963.41px;top:732.00px;font-size:17px;line-height:17px;color:#000;transform:scaleX(1.0830);transform-origin:right center;">(10)</div>
<div class="d" style="left:2100.41px;top:732.00px;font-size:17px;line-height:17px;color:#000;transform:scaleX(1.0830);transform-origin:right center;">(10)</div>
<div class="d" style="left:2237.41px;top:732.00px;font-size:17px;line-height:17px;color:#000;transform:scaleX(1.0830);transform-origin:right center;">(10)</div>
<div class="d" style="left:2374.41px;top:732.00px;font-size:17px;line-height:17px;color:#000;transform:scaleX(1.0830);transform-origin:right center;">(10)</div>
<div class="d" style="left:2511.41px;top:732.00px;font-size:17px;line-height:17px;color:#000;transform:scaleX(1.0830);transform-origin:right center;">(10)</div>
<div class="d" style="left:2648.41px;top:732.00px;font-size:17px;line-height:17px;color:#000;transform:scaleX(1.0830);transform-origin:right center;">(10)</div>
<div class="d" style="left:2785.41px;top:732.00px;font-size:17px;line-height:17px;color:#000;transform:scaleX(1.0830);transform-origin:right center;">(10)</div>
<div class="d" style="left:93.00px;top:755.00px;font-size:17px;line-height:17px;color:#000;font-style:italic;transform:scaleX(1.0585);transform-origin:left center;">% of Revenue</div>
<div class="d" style="left:605.14px;top:755.00px;font-size:17px;line-height:17px;color:#000;font-style:italic;transform:scaleX(1.1247);transform-origin:right center;">(314%)</div>
<div class="d" style="left:725.14px;top:755.00px;font-size:17px;line-height:17px;color:#000;font-style:italic;transform:scaleX(1.1247);transform-origin:right center;">(115%)</div>
<div class="d" style="left:854.87px;top:755.00px;font-size:17px;line-height:17px;color:#000;font-style:italic;transform:scaleX(1.1453);transform-origin:right center;">(66%)</div>
<div class="d" style="left:974.87px;top:755.00px;font-size:17px;line-height:17px;color:#000;font-style:italic;transform:scaleX(1.1453);transform-origin:right center;">(41%)</div>
<div class="d" style="left:1094.87px;top:755.00px;font-size:17px;line-height:17px;color:#000;font-style:italic;transform:scaleX(1.1453);transform-origin:right center;">(24%)</div>
<div class="d" style="left:1238.56px;top:755.00px;font-size:17px;line-height:17px;color:#000;font-style:italic;transform:scaleX(1.1076);transform-origin:right center;">(1,200%)</div>
<div class="d" style="left:1390.14px;top:755.00px;font-size:17px;line-height:17px;color:#000;font-style:italic;transform:scaleX(1.1247);transform-origin:right center;">(570%)</div>
<div class="d" style="left:1527.14px;top:755.00px;font-size:17px;line-height:17px;color:#000;font-style:italic;transform:scaleX(1.1247);transform-origin:right center;">(361%)</div>
<div class="d" style="left:1664.14px;top:755.00px;font-size:17px;line-height:17px;color:#000;font-style:italic;transform:scaleX(1.1247);transform-origin:right center;">(329%)</div>
<div class="d" style="left:1801.14px;top:755.00px;font-size:17px;line-height:17px;color:#000;font-style:italic;transform:scaleX(1.1247);transform-origin:right center;">(303%)</div>
<div class="d" style="left:1938.14px;top:755.00px;font-size:17px;line-height:17px;color:#000;font-style:italic;transform:scaleX(1.1247);transform-origin:right center;">(280%)</div>
<div class="d" style="left:2075.14px;top:755.00px;font-size:17px;line-height:17px;color:#000;font-style:italic;transform:scaleX(1.1247);transform-origin:right center;">(267%)</div>
<div class="d" style="left:2212.14px;top:755.00px;font-size:17px;line-height:17px;color:#000;font-style:italic;transform:scaleX(1.1247);transform-origin:right center;">(261%)</div>
<div class="d" style="left:2349.14px;top:755.00px;font-size:17px;line-height:17px;color:#000;font-style:italic;transform:scaleX(1.1247);transform-origin:right center;">(261%)</div>
<div class="d" style="left:2486.14px;top:755.00px;font-size:17px;line-height:17px;color:#000;font-style:italic;transform:scaleX(1.1247);transform-origin:right center;">(261%)</div>
<div class="d" style="left:2623.14px;top:755.00px;font-size:17px;line-height:17px;color:#000;font-style:italic;transform:scaleX(1.1247);transform-origin:right center;">(261%)</div>
<div class="d" style="left:2760.14px;top:755.00px;font-size:17px;line-height:17px;color:#000;font-style:italic;transform:scaleX(1.1247);transform-origin:right center;">(261%)</div>
<div class="d" style="left:74.25px;top:782.00px;font-size:17px;line-height:17px;color:#000;transform:scaleX(1.0196);transform-origin:left center;">Fixed Expenses</div>
<div class="d" style="left:630.41px;top:782.00px;font-size:17px;line-height:17px;color:#000;transform:scaleX(1.0830);transform-origin:right center;">(68)</div>
<div class="d" style="left:750.41px;top:782.00px;font-size:17px;line-height:17px;color:#000;transform:scaleX(1.0830);transform-origin:right center;">(68)</div>
<div class="d" style="left:870.41px;top:782.00px;font-size:17px;line-height:17px;color:#000;transform:scaleX(1.0830);transform-origin:right center;">(68)</div>
<div class="d" style="left:990.41px;top:782.00px;font-size:17px;line-height:17px;color:#000;transform:scaleX(1.0830);transform-origin:right center;">(68)</div>
<div class="d" style="left:1110.41px;top:782.00px;font-size:17px;line-height:17px;color:#000;transform:scaleX(1.0830);transform-origin:right center;">(68)</div>
<div class="d" style="left:1288.13px;top:782.00px;font-size:17px;line-height:17px;color:#000;transform:scaleX(1.1078);transform-origin:right center;">(6)</div>
<div class="d" style="left:1425.13px;top:782.00px;font-size:17px;line-height:17px;color:#000;transform:scaleX(1.1078);transform-origin:right center;">(6)</div>
<div class="d" style="left:1562.13px;top:782.00px;font-size:17px;line-height:17px;color:#000;transform:scaleX(1.1078);transform-origin:right center;">(6)</div>
<div class="d" style="left:1699.13px;top:782.00px;font-size:17px;line-height:17px;color:#000;transform:scaleX(1.1078);transform-origin:right center;">(6)</div>
<div class="d" style="left:1836.13px;top:782.00px;font-size:17px;line-height:17px;color:#000;transform:scaleX(1.1078);transform-origin:right center;">(6)</div>
<div class="d" style="left:1973.13px;top:782.00px;font-size:17px;line-height:17px;color:#000;transform:scaleX(1.1078);transform-origin:right center;">(6)</div>
<div class="d" style="left:2110.13px;top:782.00px;font-size:17px;line-height:17px;color:#000;transform:scaleX(1.1078);transform-origin:right center;">(6)</div>
<div class="d" style="left:2247.13px;top:782.00px;font-size:17px;line-height:17px;color:#000;transform:scaleX(1.1078);transform-origin:right center;">(6)</div>
<div class="d" style="left:2384.13px;top:782.00px;font-size:17px;line-height:17px;color:#000;transform:scaleX(1.1078);transform-origin:right center;">(6)</div>
<div class="d" style="left:2521.13px;top:782.00px;font-size:17px;line-height:17px;color:#000;transform:scaleX(1.1078);transform-origin:right center;">(6)</div>
<div class="d" style="left:2658.13px;top:782.00px;font-size:17px;line-height:17px;color:#000;transform:scaleX(1.1078);transform-origin:right center;">(6)</div>
<div class="d" style="left:2795.13px;top:782.00px;font-size:17px;line-height:17px;color:#000;transform:scaleX(1.1078);transform-origin:right center;">(6)</div>
<div class="d" style="left:93.00px;top:805.00px;font-size:17px;line-height:17px;color:#000;font-style:italic;transform:scaleX(1.0585);transform-origin:left center;">% of Revenue</div>
<div class="d" style="left:605.14px;top:805.00px;font-size:17px;line-height:17px;color:#000;font-style:italic;transform:scaleX(1.1247);transform-origin:right center;">(184%)</div>
<div class="d" style="left:734.87px;top:805.00px;font-size:17px;line-height:17px;color:#000;font-style:italic;transform:scaleX(1.1453);transform-origin:right center;">(60%)</div>
<div class="d" style="left:854.87px;top:805.00px;font-size:17px;line-height:17px;color:#000;font-style:italic;transform:scaleX(1.1453);transform-origin:right center;">(23%)</div>
<div class="d" style="left:974.87px;top:805.00px;font-size:17px;line-height:17px;color:#000;font-style:italic;transform:scaleX(1.1453);transform-origin:right center;">(12%)</div>
<div class="d" style="left:1104.60px;top:805.00px;font-size:17px;line-height:17px;color:#000;font-style:italic;transform:scaleX(1.1768);transform-origin:right center;">(7%)</div>
<div class="d" style="left:1253.14px;top:805.00px;font-size:17px;line-height:17px;color:#000;font-style:italic;transform:scaleX(1.1247);transform-origin:right center;">(703%)</div>
<div class="d" style="left:1390.14px;top:805.00px;font-size:17px;line-height:17px;color:#000;font-style:italic;transform:scaleX(1.1247);transform-origin:right center;">(333%)</div>
<div class="d" style="left:1527.14px;top:805.00px;font-size:17px;line-height:17px;color:#000;font-style:italic;transform:scaleX(1.1247);transform-origin:right center;">(212%)</div>
<div class="d" style="left:1664.14px;top:805.00px;font-size:17px;line-height:17px;color:#000;font-style:italic;transform:scaleX(1.1247);transform-origin:right center;">(193%)</div>
<div class="d" style="left:1801.14px;top:805.00px;font-size:17px;line-height:17px;color:#000;font-style:italic;transform:scaleX(1.1247);transform-origin:right center;">(177%)</div>
<div class="d" style="left:1938.14px;top:805.00px;font-size:17px;line-height:17px;color:#000;font-style:italic;transform:scaleX(1.1247);transform-origin:right center;">(164%)</div>
<div class="d" style="left:2075.14px;top:805.00px;font-size:17px;line-height:17px;color:#000;font-style:italic;transform:scaleX(1.1247);transform-origin:right center;">(156%)</div>
<div class="d" style="left:2212.14px;top:805.00px;font-size:17px;line-height:17px;color:#000;font-style:italic;transform:scaleX(1.1247);transform-origin:right center;">(153%)</div>
<div class="d" style="left:2349.14px;top:805.00px;font-size:17px;line-height:17px;color:#000;font-style:italic;transform:scaleX(1.1247);transform-origin:right center;">(153%)</div>
<div class="d" style="left:2486.14px;top:805.00px;font-size:17px;line-height:17px;color:#000;font-style:italic;transform:scaleX(1.1247);transform-origin:right center;">(153%)</div>
<div class="d" style="left:2623.14px;top:805.00px;font-size:17px;line-height:17px;color:#000;font-style:italic;transform:scaleX(1.1247);transform-origin:right center;">(153%)</div>
<div class="d" style="left:2760.14px;top:805.00px;font-size:17px;line-height:17px;color:#000;font-style:italic;transform:scaleX(1.1247);transform-origin:right center;">(153%)</div>
<div style="left:70px;top:828px;width:1075px;height:27px;background:#4ab1e7;"></div>
<div style="left:1175px;top:828px;width:1645px;height:27px;background:#4ab1e7;"></div>
<div class="d" style="left:85.75px;top:832.00px;font-size:21.4px;line-height:21.4px;color:#fff;font-weight:700;">EBITDA</div>
<div class="d" style="left:616.00px;top:834.00px;font-size:17px;line-height:17px;color:#fff;font-weight:700;transform:scaleX(1.0631);transform-origin:right center;">(153)</div>
<div class="d" style="left:736.00px;top:834.00px;font-size:17px;line-height:17px;color:#fff;font-weight:700;transform:scaleX(1.0631);transform-origin:right center;">(103)</div>
<div class="d" style="left:866.64px;top:834.00px;font-size:17px;line-height:17px;color:#fff;font-weight:700;transform:scaleX(1.0720);transform-origin:right center;">(14)</div>
<div class="d" style="left:981.77px;top:834.00px;font-size:17px;line-height:17px;color:#fff;font-weight:700;transform:scaleX(1.0337);transform-origin:right center;">185</div>
<div class="d" style="left:1101.77px;top:834.00px;font-size:17px;line-height:17px;color:#fff;font-weight:700;transform:scaleX(1.0337);transform-origin:right center;">568</div>
<div class="d" style="left:1274.64px;top:834.00px;font-size:17px;line-height:17px;color:#fff;font-weight:700;transform:scaleX(1.0720);transform-origin:right center;">(15)</div>
<div class="d" style="left:1411.64px;top:834.00px;font-size:17px;line-height:17px;color:#fff;font-weight:700;transform:scaleX(1.0720);transform-origin:right center;">(14)</div>
<div class="d" style="left:1548.64px;top:834.00px;font-size:17px;line-height:17px;color:#fff;font-weight:700;transform:scaleX(1.0720);transform-origin:right center;">(13)</div>
<div class="d" style="left:1685.64px;top:834.00px;font-size:17px;line-height:17px;color:#fff;font-weight:700;transform:scaleX(1.0720);transform-origin:right center;">(13)</div>
<div class="d" style="left:1822.64px;top:834.00px;font-size:17px;line-height:17px;color:#fff;font-weight:700;transform:scaleX(1.0720);transform-origin:right center;">(13)</div>
<div class="d" style="left:1959.64px;top:834.00px;font-size:17px;line-height:17px;color:#fff;font-weight:700;transform:scaleX(1.0720);transform-origin:right center;">(12)</div>
<div class="d" style="left:2096.64px;top:834.00px;font-size:17px;line-height:17px;color:#fff;font-weight:700;transform:scaleX(1.0720);transform-origin:right center;">(12)</div>
<div class="d" style="left:2233.64px;top:834.00px;font-size:17px;line-height:17px;color:#fff;font-weight:700;transform:scaleX(1.0720);transform-origin:right center;">(12)</div>
<div class="d" style="left:2370.64px;top:834.00px;font-size:17px;line-height:17px;color:#fff;font-weight:700;transform:scaleX(1.0720);transform-origin:right center;">(12)</div>
<div class="d" style="left:2507.64px;top:834.00px;font-size:17px;line-height:17px;color:#fff;font-weight:700;transform:scaleX(1.0720);transform-origin:right center;">(12)</div>
<div class="d" style="left:2644.64px;top:834.00px;font-size:17px;line-height:17px;color:#fff;font-weight:700;transform:scaleX(1.0720);transform-origin:right center;">(12)</div>
<div class="d" style="left:2781.64px;top:834.00px;font-size:17px;line-height:17px;color:#fff;font-weight:700;transform:scaleX(1.0720);transform-origin:right center;">(12)</div>
<div class="d" style="left:75.00px;top:859.00px;font-size:17px;line-height:17px;color:#000;font-style:italic;transform:scaleX(1.1404);transform-origin:left center;">EBITDA %</div>
<div class="d" style="left:605.14px;top:859.00px;font-size:17px;line-height:17px;color:#000;font-style:italic;transform:scaleX(1.1247);transform-origin:right center;">(416%)</div>
<div class="d" style="left:734.87px;top:859.00px;font-size:17px;line-height:17px;color:#000;font-style:italic;transform:scaleX(1.1453);transform-origin:right center;">(92%)</div>
<div class="d" style="left:864.60px;top:859.00px;font-size:17px;line-height:17px;color:#000;font-style:italic;transform:scaleX(1.1768);transform-origin:right center;">(5%)</div>
<div class="d" style="left:979.51px;top:859.00px;font-size:17px;line-height:17px;color:#000;font-style:italic;transform:scaleX(1.1356);transform-origin:right center;">33%</div>
<div class="d" style="left:1099.51px;top:859.00px;font-size:17px;line-height:17px;color:#000;font-style:italic;transform:scaleX(1.1356);transform-origin:right center;">56%</div>
<div class="d" style="left:1238.56px;top:859.00px;font-size:17px;line-height:17px;color:#000;font-style:italic;transform:scaleX(1.1076);transform-origin:right center;">(1,821%)</div>
<div class="d" style="left:1390.14px;top:859.00px;font-size:17px;line-height:17px;color:#000;font-style:italic;transform:scaleX(1.1247);transform-origin:right center;">(821%)</div>
<div class="d" style="left:1527.14px;top:859.00px;font-size:17px;line-height:17px;color:#000;font-style:italic;transform:scaleX(1.1247);transform-origin:right center;">(491%)</div>
<div class="d" style="left:1664.14px;top:859.00px;font-size:17px;line-height:17px;color:#000;font-style:italic;transform:scaleX(1.1247);transform-origin:right center;">(440%)</div>
<div class="d" style="left:1801.14px;top:859.00px;font-size:17px;line-height:17px;color:#000;font-style:italic;transform:scaleX(1.1247);transform-origin:right center;">(398%)</div>
<div class="d" style="left:1938.14px;top:859.00px;font-size:17px;line-height:17px;color:#000;font-style:italic;transform:scaleX(1.1247);transform-origin:right center;">(362%)</div>
<div class="d" style="left:2075.14px;top:859.00px;font-size:17px;line-height:17px;color:#000;font-style:italic;transform:scaleX(1.1247);transform-origin:right center;">(341%)</div>
<div class="d" style="left:2212.14px;top:859.00px;font-size:17px;line-height:17px;color:#000;font-style:italic;transform:scaleX(1.1247);transform-origin:right center;">(331%)</div>
<div class="d" style="left:2349.14px;top:859.00px;font-size:17px;line-height:17px;color:#000;font-style:italic;transform:scaleX(1.1247);transform-origin:right center;">(331%)</div>
<div class="d" style="left:2486.14px;top:859.00px;font-size:17px;line-height:17px;color:#000;font-style:italic;transform:scaleX(1.1247);transform-origin:right center;">(331%)</div>
<div class="d" style="left:2623.14px;top:859.00px;font-size:17px;line-height:17px;color:#000;font-style:italic;transform:scaleX(1.1247);transform-origin:right center;">(331%)</div>
<div class="d" style="left:2760.14px;top:859.00px;font-size:17px;line-height:17px;color:#000;font-style:italic;transform:scaleX(1.1247);transform-origin:right center;">(331%)</div>
<div class="d" style="left:74.25px;top:882.00px;font-size:17px;line-height:17px;color:#000;transform:scaleX(1.0109);transform-origin:left center;">Depreciation &amp; Amortization</div>
<div class="d" style="left:640.13px;top:882.00px;font-size:17px;line-height:17px;color:#000;transform:scaleX(1.1078);transform-origin:right center;">(9)</div>
<div class="d" style="left:760.13px;top:882.00px;font-size:17px;line-height:17px;color:#000;transform:scaleX(1.1078);transform-origin:right center;">(9)</div>
<div class="d" style="left:880.13px;top:882.00px;font-size:17px;line-height:17px;color:#000;transform:scaleX(1.1078);transform-origin:right center;">(9)</div>
<div class="d" style="left:1000.13px;top:882.00px;font-size:17px;line-height:17px;color:#000;transform:scaleX(1.1078);transform-origin:right center;">(9)</div>
<div class="d" style="left:1120.13px;top:882.00px;font-size:17px;line-height:17px;color:#000;transform:scaleX(1.1078);transform-origin:right center;">(9)</div>
<div class="d" style="left:1288.13px;top:882.00px;font-size:17px;line-height:17px;color:#000;transform:scaleX(1.1078);transform-origin:right center;">(0)</div>
<div class="d" style="left:1425.13px;top:882.00px;font-size:17px;line-height:17px;color:#000;transform:scaleX(1.1078);transform-origin:right center;">(1)</div>
<div class="d" style="left:1562.13px;top:882.00px;font-size:17px;line-height:17px;color:#000;transform:scaleX(1.1078);transform-origin:right center;">(1)</div>
<div class="d" style="left:1699.13px;top:882.00px;font-size:17px;line-height:17px;color:#000;transform:scaleX(1.1078);transform-origin:right center;">(1)</div>
<div class="d" style="left:1836.13px;top:882.00px;font-size:17px;line-height:17px;color:#000;transform:scaleX(1.1078);transform-origin:right center;">(1)</div>
<div class="d" style="left:1973.13px;top:882.00px;font-size:17px;line-height:17px;color:#000;transform:scaleX(1.1078);transform-origin:right center;">(1)</div>
<div class="d" style="left:2110.13px;top:882.00px;font-size:17px;line-height:17px;color:#000;transform:scaleX(1.1078);transform-origin:right center;">(1)</div>
<div class="d" style="left:2247.13px;top:882.00px;font-size:17px;line-height:17px;color:#000;transform:scaleX(1.1078);transform-origin:right center;">(1)</div>
<div class="d" style="left:2384.13px;top:882.00px;font-size:17px;line-height:17px;color:#000;transform:scaleX(1.1078);transform-origin:right center;">(1)</div>
<div class="d" style="left:2521.13px;top:882.00px;font-size:17px;line-height:17px;color:#000;transform:scaleX(1.1078);transform-origin:right center;">(1)</div>
<div class="d" style="left:2658.13px;top:882.00px;font-size:17px;line-height:17px;color:#000;transform:scaleX(1.1078);transform-origin:right center;">(1)</div>
<div class="d" style="left:2795.13px;top:882.00px;font-size:17px;line-height:17px;color:#000;transform:scaleX(1.1078);transform-origin:right center;">(1)</div>
<div class="d" style="left:74.25px;top:905.00px;font-size:17px;line-height:17px;color:#000;transform:scaleX(1.1250);transform-origin:left center;">EBIT</div>
<div class="d" style="left:620.68px;top:905.00px;font-size:17px;line-height:17px;color:#000;transform:scaleX(1.0700);transform-origin:right center;">(162)</div>
<div class="d" style="left:740.68px;top:905.00px;font-size:17px;line-height:17px;color:#000;transform:scaleX(1.0700);transform-origin:right center;">(113)</div>
<div class="d" style="left:870.41px;top:905.00px;font-size:17px;line-height:17px;color:#000;transform:scaleX(1.0830);transform-origin:right center;">(23)</div>
<div class="d" style="left:985.21px;top:905.00px;font-size:17px;line-height:17px;color:#000;transform:scaleX(1.0279);transform-origin:right center;">176</div>
<div class="d" style="left:1105.21px;top:905.00px;font-size:17px;line-height:17px;color:#000;transform:scaleX(1.0279);transform-origin:right center;">558</div>
<div class="d" style="left:1278.41px;top:905.00px;font-size:17px;line-height:17px;color:#000;transform:scaleX(1.0830);transform-origin:right center;">(15)</div>
<div class="d" style="left:1415.41px;top:905.00px;font-size:17px;line-height:17px;color:#000;transform:scaleX(1.0830);transform-origin:right center;">(14)</div>
<div class="d" style="left:1552.41px;top:905.00px;font-size:17px;line-height:17px;color:#000;transform:scaleX(1.0830);transform-origin:right center;">(14)</div>
<div class="d" style="left:1689.41px;top:905.00px;font-size:17px;line-height:17px;color:#000;transform:scaleX(1.0830);transform-origin:right center;">(14)</div>
<div class="d" style="left:1826.41px;top:905.00px;font-size:17px;line-height:17px;color:#000;transform:scaleX(1.0830);transform-origin:right center;">(13)</div>
<div class="d" style="left:1963.41px;top:905.00px;font-size:17px;line-height:17px;color:#000;transform:scaleX(1.0830);transform-origin:right center;">(13)</div>
<div class="d" style="left:2100.41px;top:905.00px;font-size:17px;line-height:17px;color:#000;transform:scaleX(1.0830);transform-origin:right center;">(13)</div>
<div class="d" style="left:2237.41px;top:905.00px;font-size:17px;line-height:17px;color:#000;transform:scaleX(1.0830);transform-origin:right center;">(13)</div>
<div class="d" style="left:2374.41px;top:905.00px;font-size:17px;line-height:17px;color:#000;transform:scaleX(1.0830);transform-origin:right center;">(13)</div>
<div class="d" style="left:2511.41px;top:905.00px;font-size:17px;line-height:17px;color:#000;transform:scaleX(1.0830);transform-origin:right center;">(13)</div>
<div class="d" style="left:2648.41px;top:905.00px;font-size:17px;line-height:17px;color:#000;transform:scaleX(1.0830);transform-origin:right center;">(13)</div>
<div class="d" style="left:2785.41px;top:905.00px;font-size:17px;line-height:17px;color:#000;transform:scaleX(1.0830);transform-origin:right center;">(13)</div>
<div class="d" style="left:74.25px;top:928.00px;font-size:17px;line-height:17px;color:#000;transform:scaleX(1.0258);transform-origin:left center;">Net Interest Expense</div>
<div class="d" style="left:630.41px;top:928.00px;font-size:17px;line-height:17px;color:#000;transform:scaleX(1.0830);transform-origin:right center;">(18)</div>
<div class="d" style="left:750.41px;top:928.00px;font-size:17px;line-height:17px;color:#000;transform:scaleX(1.0830);transform-origin:right center;">(17)</div>
<div class="d" style="left:870.41px;top:928.00px;font-size:17px;line-height:17px;color:#000;transform:scaleX(1.0830);transform-origin:right center;">(14)</div>
<div class="d" style="left:990.41px;top:928.00px;font-size:17px;line-height:17px;color:#000;transform:scaleX(1.0830);transform-origin:right center;">(11)</div>
<div class="d" style="left:1120.13px;top:928.00px;font-size:17px;line-height:17px;color:#000;transform:scaleX(1.1078);transform-origin:right center;">(7)</div>
<div class="d" style="left:1288.13px;top:928.00px;font-size:17px;line-height:17px;color:#000;transform:scaleX(1.1078);transform-origin:right center;">(1)</div>
<div class="d" style="left:1425.13px;top:928.00px;font-size:17px;line-height:17px;color:#000;transform:scaleX(1.1078);transform-origin:right center;">(1)</div>
<div class="d" style="left:1562.13px;top:928.00px;font-size:17px;line-height:17px;color:#000;transform:scaleX(1.1078);transform-origin:right center;">(2)</div>
<div class="d" style="left:1699.13px;top:928.00px;font-size:17px;line-height:17px;color:#000;transform:scaleX(1.1078);transform-origin:right center;">(2)</div>
<div class="d" style="left:1836.13px;top:928.00px;font-size:17px;line-height:17px;color:#000;transform:scaleX(1.1078);transform-origin:right center;">(2)</div>
<div class="d" style="left:1973.13px;top:928.00px;font-size:17px;line-height:17px;color:#000;transform:scaleX(1.1078);transform-origin:right center;">(2)</div>
<div class="d" style="left:2110.13px;top:928.00px;font-size:17px;line-height:17px;color:#000;transform:scaleX(1.1078);transform-origin:right center;">(2)</div>
<div class="d" style="left:2247.13px;top:928.00px;font-size:17px;line-height:17px;color:#000;transform:scaleX(1.1078);transform-origin:right center;">(2)</div>
<div class="d" style="left:2384.13px;top:928.00px;font-size:17px;line-height:17px;color:#000;transform:scaleX(1.1078);transform-origin:right center;">(2)</div>
<div class="d" style="left:2521.13px;top:928.00px;font-size:17px;line-height:17px;color:#000;transform:scaleX(1.1078);transform-origin:right center;">(2)</div>
<div class="d" style="left:2658.13px;top:928.00px;font-size:17px;line-height:17px;color:#000;transform:scaleX(1.1078);transform-origin:right center;">(2)</div>
<div class="d" style="left:2795.13px;top:928.00px;font-size:17px;line-height:17px;color:#000;transform:scaleX(1.1078);transform-origin:right center;">(2)</div>
<div class="d" style="left:74.25px;top:951.00px;font-size:17px;line-height:17px;color:#000;transform:scaleX(1.0664);transform-origin:left center;">Net Profit Before Tax</div>
<div class="d" style="left:620.68px;top:951.00px;font-size:17px;line-height:17px;color:#000;transform:scaleX(1.0700);transform-origin:right center;">(180)</div>
<div class="d" style="left:740.68px;top:951.00px;font-size:17px;line-height:17px;color:#000;transform:scaleX(1.0700);transform-origin:right center;">(130)</div>
<div class="d" style="left:870.41px;top:951.00px;font-size:17px;line-height:17px;color:#000;transform:scaleX(1.0830);transform-origin:right center;">(37)</div>
<div class="d" style="left:985.21px;top:951.00px;font-size:17px;line-height:17px;color:#000;transform:scaleX(1.0279);transform-origin:right center;">165</div>
<div class="d" style="left:1105.21px;top:951.00px;font-size:17px;line-height:17px;color:#000;transform:scaleX(1.0279);transform-origin:right center;">551</div>
<div class="d" style="left:1278.41px;top:951.00px;font-size:17px;line-height:17px;color:#000;transform:scaleX(1.0830);transform-origin:right center;">(16)</div>
<div class="d" style="left:1415.41px;top:951.00px;font-size:17px;line-height:17px;color:#000;transform:scaleX(1.0830);transform-origin:right center;">(15)</div>
<div class="d" style="left:1552.41px;top:951.00px;font-size:17px;line-height:17px;color:#000;transform:scaleX(1.0830);transform-origin:right center;">(15)</div>
<div class="d" style="left:1689.41px;top:951.00px;font-size:17px;line-height:17px;color:#000;transform:scaleX(1.0830);transform-origin:right center;">(15)</div>
<div class="d" style="left:1826.41px;top:951.00px;font-size:17px;line-height:17px;color:#000;transform:scaleX(1.0830);transform-origin:right center;">(15)</div>
<div class="d" style="left:1963.41px;top:951.00px;font-size:17px;line-height:17px;color:#000;transform:scaleX(1.0830);transform-origin:right center;">(15)</div>
<div class="d" style="left:2100.41px;top:951.00px;font-size:17px;line-height:17px;color:#000;transform:scaleX(1.0830);transform-origin:right center;">(15)</div>
<div class="d" style="left:2237.41px;top:951.00px;font-size:17px;line-height:17px;color:#000;transform:scaleX(1.0830);transform-origin:right center;">(15)</div>
<div class="d" style="left:2374.41px;top:951.00px;font-size:17px;line-height:17px;color:#000;transform:scaleX(1.0830);transform-origin:right center;">(15)</div>
<div class="d" style="left:2511.41px;top:951.00px;font-size:17px;line-height:17px;color:#000;transform:scaleX(1.0830);transform-origin:right center;">(15)</div>
<div class="d" style="left:2648.41px;top:951.00px;font-size:17px;line-height:17px;color:#000;transform:scaleX(1.0830);transform-origin:right center;">(15)</div>
<div class="d" style="left:2785.41px;top:951.00px;font-size:17px;line-height:17px;color:#000;transform:scaleX(1.0830);transform-origin:right center;">(15)</div>
<div class="d" style="left:74.25px;top:974.00px;font-size:17px;line-height:17px;color:#000;transform:scaleX(1.0505);transform-origin:left center;">Tax Expense</div>
<div class="d" style="left:647.58px;top:974.00px;font-size:17px;line-height:17px;color:#000;transform:scaleX(1.1413);transform-origin:right center;">-</div>
<div class="d" style="left:767.58px;top:974.00px;font-size:17px;line-height:17px;color:#000;transform:scaleX(1.1413);transform-origin:right center;">-</div>
<div class="d" style="left:887.58px;top:974.00px;font-size:17px;line-height:17px;color:#000;transform:scaleX(1.1413);transform-origin:right center;">-</div>
<div class="d" style="left:990.41px;top:974.00px;font-size:17px;line-height:17px;color:#000;transform:scaleX(1.0830);transform-origin:right center;">(41)</div>
<div class="d" style="left:1100.68px;top:974.00px;font-size:17px;line-height:17px;color:#000;transform:scaleX(1.0700);transform-origin:right center;">(138)</div>
<div class="d" style="left:1295.58px;top:974.00px;font-size:17px;line-height:17px;color:#000;transform:scaleX(1.1413);transform-origin:right center;">-</div>
<div class="d" style="left:1432.58px;top:974.00px;font-size:17px;line-height:17px;color:#000;transform:scaleX(1.1413);transform-origin:right center;">-</div>
<div class="d" style="left:1569.58px;top:974.00px;font-size:17px;line-height:17px;color:#000;transform:scaleX(1.1413);transform-origin:right center;">-</div>
<div class="d" style="left:1706.58px;top:974.00px;font-size:17px;line-height:17px;color:#000;transform:scaleX(1.1413);transform-origin:right center;">-</div>
<div class="d" style="left:1843.58px;top:974.00px;font-size:17px;line-height:17px;color:#000;transform:scaleX(1.1413);transform-origin:right center;">-</div>
<div class="d" style="left:1980.58px;top:974.00px;font-size:17px;line-height:17px;color:#000;transform:scaleX(1.1413);transform-origin:right center;">-</div>
<div class="d" style="left:2117.58px;top:974.00px;font-size:17px;line-height:17px;color:#000;transform:scaleX(1.1413);transform-origin:right center;">-</div>
<div class="d" style="left:2254.58px;top:974.00px;font-size:17px;line-height:17px;color:#000;transform:scaleX(1.1413);transform-origin:right center;">-</div>
<div class="d" style="left:2391.58px;top:974.00px;font-size:17px;line-height:17px;color:#000;transform:scaleX(1.1413);transform-origin:right center;">-</div>
<div class="d" style="left:2528.58px;top:974.00px;font-size:17px;line-height:17px;color:#000;transform:scaleX(1.1413);transform-origin:right center;">-</div>
<div class="d" style="left:2665.58px;top:974.00px;font-size:17px;line-height:17px;color:#000;transform:scaleX(1.1413);transform-origin:right center;">-</div>
<div class="d" style="left:2802.58px;top:974.00px;font-size:17px;line-height:17px;color:#000;transform:scaleX(1.1413);transform-origin:right center;">-</div>
<div style="left:70px;top:992px;width:1075px;height:27px;background:#4ab1e7;"></div>
<div style="left:1175px;top:992px;width:1645px;height:27px;background:#4ab1e7;"></div>
<div class="d" style="left:85.75px;top:996.00px;font-size:21.4px;line-height:21.4px;color:#fff;font-weight:700;transform:scaleX(0.9745);transform-origin:left center;">Net Profit After Tax</div>
<div class="d" style="left:616.00px;top:998.00px;font-size:17px;line-height:17px;color:#fff;font-weight:700;transform:scaleX(1.0631);transform-origin:right center;">(180)</div>
<div class="d" style="left:736.00px;top:998.00px;font-size:17px;line-height:17px;color:#fff;font-weight:700;transform:scaleX(1.0631);transform-origin:right center;">(130)</div>
<div class="d" style="left:866.64px;top:998.00px;font-size:17px;line-height:17px;color:#fff;font-weight:700;transform:scaleX(1.0720);transform-origin:right center;">(37)</div>
<div class="d" style="left:981.77px;top:998.00px;font-size:17px;line-height:17px;color:#fff;font-weight:700;transform:scaleX(1.0337);transform-origin:right center;">124</div>
<div class="d" style="left:1101.77px;top:998.00px;font-size:17px;line-height:17px;color:#fff;font-weight:700;transform:scaleX(1.0337);transform-origin:right center;">413</div>
<div class="d" style="left:1274.64px;top:998.00px;font-size:17px;line-height:17px;color:#fff;font-weight:700;transform:scaleX(1.0720);transform-origin:right center;">(16)</div>
<div class="d" style="left:1411.64px;top:998.00px;font-size:17px;line-height:17px;color:#fff;font-weight:700;transform:scaleX(1.0720);transform-origin:right center;">(15)</div>
<div class="d" style="left:1548.64px;top:998.00px;font-size:17px;line-height:17px;color:#fff;font-weight:700;transform:scaleX(1.0720);transform-origin:right center;">(15)</div>
<div class="d" style="left:1685.64px;top:998.00px;font-size:17px;line-height:17px;color:#fff;font-weight:700;transform:scaleX(1.0720);transform-origin:right center;">(15)</div>
<div class="d" style="left:1822.64px;top:998.00px;font-size:17px;line-height:17px;color:#fff;font-weight:700;transform:scaleX(1.0720);transform-origin:right center;">(15)</div>
<div class="d" style="left:1959.64px;top:998.00px;font-size:17px;line-height:17px;color:#fff;font-weight:700;transform:scaleX(1.0720);transform-origin:right center;">(15)</div>
<div class="d" style="left:2096.64px;top:998.00px;font-size:17px;line-height:17px;color:#fff;font-weight:700;transform:scaleX(1.0720);transform-origin:right center;">(15)</div>
<div class="d" style="left:2233.64px;top:998.00px;font-size:17px;line-height:17px;color:#fff;font-weight:700;transform:scaleX(1.0720);transform-origin:right center;">(15)</div>
<div class="d" style="left:2370.64px;top:998.00px;font-size:17px;line-height:17px;color:#fff;font-weight:700;transform:scaleX(1.0720);transform-origin:right center;">(15)</div>
<div class="d" style="left:2507.64px;top:998.00px;font-size:17px;line-height:17px;color:#fff;font-weight:700;transform:scaleX(1.0720);transform-origin:right center;">(15)</div>
<div class="d" style="left:2644.64px;top:998.00px;font-size:17px;line-height:17px;color:#fff;font-weight:700;transform:scaleX(1.0720);transform-origin:right center;">(15)</div>
<div class="d" style="left:2781.64px;top:998.00px;font-size:17px;line-height:17px;color:#fff;font-weight:700;transform:scaleX(1.0720);transform-origin:right center;">(15)</div>
<div class="d" style="left:92.50px;top:1024.00px;font-size:17px;line-height:17px;color:#000;font-style:italic;transform:scaleX(1.0755);transform-origin:left center;">Net Profit After Tax %</div>
<div class="d" style="left:605.14px;top:1024.00px;font-size:17px;line-height:17px;color:#000;font-style:italic;transform:scaleX(1.1247);transform-origin:right center;">(489%)</div>
<div class="d" style="left:725.14px;top:1024.00px;font-size:17px;line-height:17px;color:#000;font-style:italic;transform:scaleX(1.1247);transform-origin:right center;">(115%)</div>
<div class="d" style="left:854.87px;top:1024.00px;font-size:17px;line-height:17px;color:#000;font-style:italic;transform:scaleX(1.1453);transform-origin:right center;">(13%)</div>
<div class="d" style="left:979.51px;top:1024.00px;font-size:17px;line-height:17px;color:#000;font-style:italic;transform:scaleX(1.1356);transform-origin:right center;">22%</div>
<div class="d" style="left:1099.51px;top:1024.00px;font-size:17px;line-height:17px;color:#000;font-style:italic;transform:scaleX(1.1356);transform-origin:right center;">41%</div>
<div class="d" style="left:1238.56px;top:1024.00px;font-size:17px;line-height:17px;color:#000;font-style:italic;transform:scaleX(1.1076);transform-origin:right center;">(1,993%)</div>
<div class="d" style="left:1390.14px;top:1024.00px;font-size:17px;line-height:17px;color:#000;font-style:italic;transform:scaleX(1.1247);transform-origin:right center;">(913%)</div>
<div class="d" style="left:1527.14px;top:1024.00px;font-size:17px;line-height:17px;color:#000;font-style:italic;transform:scaleX(1.1247);transform-origin:right center;">(581%)</div>
<div class="d" style="left:1664.14px;top:1024.00px;font-size:17px;line-height:17px;color:#000;font-style:italic;transform:scaleX(1.1247);transform-origin:right center;">(522%)</div>
<div class="d" style="left:1801.14px;top:1024.00px;font-size:17px;line-height:17px;color:#000;font-style:italic;transform:scaleX(1.1247);transform-origin:right center;">(474%)</div>
<div class="d" style="left:1938.14px;top:1024.00px;font-size:17px;line-height:17px;color:#000;font-style:italic;transform:scaleX(1.1247);transform-origin:right center;">(432%)</div>
<div class="d" style="left:2075.14px;top:1024.00px;font-size:17px;line-height:17px;color:#000;font-style:italic;transform:scaleX(1.1247);transform-origin:right center;">(407%)</div>
<div class="d" style="left:2212.14px;top:1024.00px;font-size:17px;line-height:17px;color:#000;font-style:italic;transform:scaleX(1.1247);transform-origin:right center;">(396%)</div>
<div class="d" style="left:2349.14px;top:1024.00px;font-size:17px;line-height:17px;color:#000;font-style:italic;transform:scaleX(1.1247);transform-origin:right center;">(395%)</div>
<div class="d" style="left:2486.14px;top:1024.00px;font-size:17px;line-height:17px;color:#000;font-style:italic;transform:scaleX(1.1247);transform-origin:right center;">(395%)</div>
<div class="d" style="left:2623.14px;top:1024.00px;font-size:17px;line-height:17px;color:#000;font-style:italic;transform:scaleX(1.1247);transform-origin:right center;">(395%)</div>
<div class="d" style="left:2760.14px;top:1024.00px;font-size:17px;line-height:17px;color:#000;font-style:italic;transform:scaleX(1.1247);transform-origin:right center;">(394%)</div>
<div class="d" style="left:74.25px;top:1634.00px;font-size:17px;line-height:17px;color:#000;transform:scaleX(1.0156);transform-origin:left center;">Current Assets</div>
<div class="d" style="left:625.21px;top:1634.00px;font-size:17px;line-height:17px;color:#000;transform:scaleX(1.0279);transform-origin:right center;">727</div>
<div class="d" style="left:745.21px;top:1634.00px;font-size:17px;line-height:17px;color:#000;transform:scaleX(1.0279);transform-origin:right center;">562</div>
<div class="d" style="left:865.21px;top:1634.00px;font-size:17px;line-height:17px;color:#000;transform:scaleX(1.0279);transform-origin:right center;">490</div>
<div class="d" style="left:985.21px;top:1634.00px;font-size:17px;line-height:17px;color:#000;transform:scaleX(1.0279);transform-origin:right center;">577</div>
<div class="d" style="left:1105.21px;top:1634.00px;font-size:17px;line-height:17px;color:#000;transform:scaleX(1.0279);transform-origin:right center;">951</div>
<div class="d" style="left:1273.21px;top:1634.00px;font-size:17px;line-height:17px;color:#000;transform:scaleX(1.0279);transform-origin:right center;">846</div>
<div class="d" style="left:1410.21px;top:1634.00px;font-size:17px;line-height:17px;color:#000;transform:scaleX(1.0279);transform-origin:right center;">812</div>
<div class="d" style="left:1547.21px;top:1634.00px;font-size:17px;line-height:17px;color:#000;transform:scaleX(1.0279);transform-origin:right center;">874</div>
<div class="d" style="left:1684.21px;top:1634.00px;font-size:17px;line-height:17px;color:#000;transform:scaleX(1.0279);transform-origin:right center;">856</div>
<div class="d" style="left:1821.21px;top:1634.00px;font-size:17px;line-height:17px;color:#000;transform:scaleX(1.0279);transform-origin:right center;">838</div>
<div class="d" style="left:1958.21px;top:1634.00px;font-size:17px;line-height:17px;color:#000;transform:scaleX(1.0279);transform-origin:right center;">820</div>
<div class="d" style="left:2095.21px;top:1634.00px;font-size:17px;line-height:17px;color:#000;transform:scaleX(1.0279);transform-origin:right center;">804</div>
<div class="d" style="left:2232.21px;top:1634.00px;font-size:17px;line-height:17px;color:#000;transform:scaleX(1.0279);transform-origin:right center;">789</div>
<div class="d" style="left:2369.21px;top:1634.00px;font-size:17px;line-height:17px;color:#000;transform:scaleX(1.0279);transform-origin:right center;">774</div>
<div class="d" style="left:2506.21px;top:1634.00px;font-size:17px;line-height:17px;color:#000;transform:scaleX(1.0279);transform-origin:right center;">758</div>
<div class="d" style="left:2643.21px;top:1634.00px;font-size:17px;line-height:17px;color:#000;transform:scaleX(1.0279);transform-origin:right center;">743</div>
<div class="d" style="left:2780.21px;top:1634.00px;font-size:17px;line-height:17px;color:#000;transform:scaleX(1.0279);transform-origin:right center;">727</div>
<div class="d" style="left:74.25px;top:1656.00px;font-size:17px;line-height:17px;color:#000;transform:scaleX(1.0320);transform-origin:left center;">Non-Current Assets</div>
<div class="d" style="left:634.94px;top:1656.00px;font-size:17px;line-height:17px;color:#000;transform:scaleX(1.0279);transform-origin:right center;">84</div>
<div class="d" style="left:754.94px;top:1656.00px;font-size:17px;line-height:17px;color:#000;transform:scaleX(1.0279);transform-origin:right center;">75</div>
<div class="d" style="left:874.94px;top:1656.00px;font-size:17px;line-height:17px;color:#000;transform:scaleX(1.0279);transform-origin:right center;">66</div>
<div class="d" style="left:994.94px;top:1656.00px;font-size:17px;line-height:17px;color:#000;transform:scaleX(1.0279);transform-origin:right center;">57</div>
<div class="d" style="left:1114.94px;top:1656.00px;font-size:17px;line-height:17px;color:#000;transform:scaleX(1.0279);transform-origin:right center;">47</div>
<div class="d" style="left:1282.94px;top:1656.00px;font-size:17px;line-height:17px;color:#000;transform:scaleX(1.0279);transform-origin:right center;">45</div>
<div class="d" style="left:1419.94px;top:1656.00px;font-size:17px;line-height:17px;color:#000;transform:scaleX(1.0279);transform-origin:right center;">65</div>
<div class="d" style="left:1556.94px;top:1656.00px;font-size:17px;line-height:17px;color:#000;transform:scaleX(1.0279);transform-origin:right center;">85</div>
<div class="d" style="left:1693.94px;top:1656.00px;font-size:17px;line-height:17px;color:#000;transform:scaleX(1.0279);transform-origin:right center;">87</div>
<div class="d" style="left:1830.94px;top:1656.00px;font-size:17px;line-height:17px;color:#000;transform:scaleX(1.0279);transform-origin:right center;">88</div>
<div class="d" style="left:1967.94px;top:1656.00px;font-size:17px;line-height:17px;color:#000;transform:scaleX(1.0279);transform-origin:right center;">89</div>
<div class="d" style="left:2104.94px;top:1656.00px;font-size:17px;line-height:17px;color:#000;transform:scaleX(1.0279);transform-origin:right center;">88</div>
<div class="d" style="left:2241.94px;top:1656.00px;font-size:17px;line-height:17px;color:#000;transform:scaleX(1.0279);transform-origin:right center;">88</div>
<div class="d" style="left:2378.94px;top:1656.00px;font-size:17px;line-height:17px;color:#000;transform:scaleX(1.0279);transform-origin:right center;">87</div>
<div class="d" style="left:2515.94px;top:1656.00px;font-size:17px;line-height:17px;color:#000;transform:scaleX(1.0279);transform-origin:right center;">86</div>
<div class="d" style="left:2652.94px;top:1656.00px;font-size:17px;line-height:17px;color:#000;transform:scaleX(1.0279);transform-origin:right center;">85</div>
<div class="d" style="left:2789.94px;top:1656.00px;font-size:17px;line-height:17px;color:#000;transform:scaleX(1.0279);transform-origin:right center;">84</div>
<svg style="left:0;top:1100px" width="2860" height="450" viewBox="0 1100 2860 450"><line x1="70.0" y1="1159.5" x2="1044.0" y2="1159.5" stroke="#5dadd9" stroke-width="1"/><line x1="70.0" y1="1201.5" x2="1044.0" y2="1201.5" stroke="#5dadd9" stroke-width="1"/><line x1="70.0" y1="1244.5" x2="1044.0" y2="1244.5" stroke="#5dadd9" stroke-width="1"/><line x1="70.0" y1="1286.5" x2="1044.0" y2="1286.5" stroke="#5dadd9" stroke-width="1"/><line x1="70.0" y1="1328.5" x2="1044.0" y2="1328.5" stroke="#5dadd9" stroke-width="1"/><line x1="70.0" y1="1370.5" x2="1044.0" y2="1370.5" stroke="#5dadd9" stroke-width="1"/><line x1="70.0" y1="1412.5" x2="1044.0" y2="1412.5" stroke="#5dadd9" stroke-width="1"/><line x1="70.0" y1="1454.5" x2="1044.0" y2="1454.5" stroke="#5dadd9" stroke-width="1"/><line x1="70.0" y1="1496.5" x2="1044.0" y2="1496.5" stroke="#5dadd9" stroke-width="1"/><line x1="70.5" y1="1159.0" x2="70.5" y2="1497.0" stroke="#5dadd9" stroke-width="1"/><line x1="265.5" y1="1159.0" x2="265.5" y2="1497.0" stroke="#5dadd9" stroke-width="1"/><line x1="459.5" y1="1159.0" x2="459.5" y2="1497.0" stroke="#5dadd9" stroke-width="1"/><line x1="654.5" y1="1159.0" x2="654.5" y2="1497.0" stroke="#5dadd9" stroke-width="1"/><line x1="848.5" y1="1159.0" x2="848.5" y2="1497.0" stroke="#5dadd9" stroke-width="1"/><line x1="1043.5" y1="1159.0" x2="1043.5" y2="1497.0" stroke="#5dadd9" stroke-width="1"/><line x1="70.0" y1="1412.5" x2="1044.0" y2="1412.5" stroke="#44639f" stroke-width="1"/><polyline points="166.8,1403.5 361.4,1387.5 556.0,1349.0 750.6,1293.6 945.2,1198.7" fill="none" stroke="#ec7c71" stroke-width="3" stroke-linejoin="round"/><circle cx="166.8" cy="1403.5" r="5.6" fill="#ec7c71"/><circle cx="361.4" cy="1387.5" r="5.6" fill="#ec7c71"/><circle cx="556.0" cy="1349.0" r="5.6" fill="#ec7c71"/><circle cx="750.6" cy="1293.6" r="5.6" fill="#ec7c71"/><circle cx="945.2" cy="1198.7" r="5.6" fill="#ec7c71"/><polyline points="166.8,1443.5 361.4,1433.0 556.0,1414.2 750.6,1372.4 945.2,1291.7" fill="none" stroke="#5d9b41" stroke-width="3" stroke-linejoin="round"/><circle cx="166.8" cy="1443.5" r="5.6" fill="#5d9b41"/><circle cx="361.4" cy="1433.0" r="5.6" fill="#5d9b41"/><circle cx="556.0" cy="1414.2" r="5.6" fill="#5d9b41"/><circle cx="750.6" cy="1372.4" r="5.6" fill="#5d9b41"/><circle cx="945.2" cy="1291.7" r="5.6" fill="#5d9b41"/><polyline points="166.8,1449.2 361.4,1438.7 556.0,1419.1 750.6,1385.2 945.2,1324.4" fill="none" stroke="#4a4fd0" stroke-width="3" stroke-linejoin="round"/><circle cx="166.8" cy="1449.2" r="5.6" fill="#4a4fd0"/><circle cx="361.4" cy="1438.7" r="5.6" fill="#4a4fd0"/><circle cx="556.0" cy="1419.1" r="5.6" fill="#4a4fd0"/><circle cx="750.6" cy="1385.2" r="5.6" fill="#4a4fd0"/><circle cx="945.2" cy="1324.4" r="5.6" fill="#4a4fd0"/><line x1="328.5" y1="1131.3" x2="374" y2="1131.3" stroke="#ec7c71" stroke-width="2.6"/><circle cx="351.2" cy="1131.3" r="4.2" fill="#ec7c71"/><line x1="489.5" y1="1131.3" x2="535.7" y2="1131.3" stroke="#5d9b41" stroke-width="2.6"/><circle cx="512.6" cy="1131.3" r="4.2" fill="#5d9b41"/><line x1="652.6" y1="1131.3" x2="698.9" y2="1131.3" stroke="#4a4fd0" stroke-width="2.6"/><circle cx="675.8" cy="1131.3" r="4.2" fill="#4a4fd0"/><line x1="1175.5" y1="1227.50" x2="2752" y2="1227.50" stroke="#5dadd9" stroke-width="1"/><line x1="1175.5" y1="1294.50" x2="2752" y2="1294.50" stroke="#5dadd9" stroke-width="1"/><line x1="1175.5" y1="1361.50" x2="2752" y2="1361.50" stroke="#5dadd9" stroke-width="1"/><line x1="1175.5" y1="1429.50" x2="2752" y2="1429.50" stroke="#5dadd9" stroke-width="1"/><line x1="1306.50" y1="1160" x2="1306.50" y2="1496.3" stroke="#5dadd9" stroke-width="1"/><line x1="1438.50" y1="1160" x2="1438.50" y2="1496.3" stroke="#5dadd9" stroke-width="1"/><line x1="1569.50" y1="1160" x2="1569.50" y2="1496.3" stroke="#5dadd9" stroke-width="1"/><line x1="1700.50" y1="1160" x2="1700.50" y2="1496.3" stroke="#5dadd9" stroke-width="1"/><line x1="1832.50" y1="1160" x2="1832.50" y2="1496.3" stroke="#5dadd9" stroke-width="1"/><line x1="1963.50" y1="1160" x2="1963.50" y2="1496.3" stroke="#5dadd9" stroke-width="1"/><line x1="2095.50" y1="1160" x2="2095.50" y2="1496.3" stroke="#5dadd9" stroke-width="1"/><line x1="2226.50" y1="1160" x2="2226.50" y2="1496.3" stroke="#5dadd9" stroke-width="1"/><line x1="2357.50" y1="1160" x2="2357.50" y2="1496.3" stroke="#5dadd9" stroke-width="1"/><line x1="2489.50" y1="1160" x2="2489.50" y2="1496.3" stroke="#5dadd9" stroke-width="1"/><line x1="2620.50" y1="1160" x2="2620.50" y2="1496.3" stroke="#5dadd9" stroke-width="1"/><rect x="1175.0" y="1159" width="1577.5" height="2" fill="#52acda"/><rect x="1175.0" y="1495.7" width="1577.5" height="2" fill="#52acda"/><rect x="1175.0" y="1160" width="1.2" height="336.30" fill="#52acda"/><rect x="2751.2" y="1160" width="1.6" height="336.30" fill="#52acda"/><polyline points="1239.7,1215.6 1371.1,1203.9 1502.4,1190.8 1633.8,1186.9 1765.2,1183.5 1896.6,1179.6 2027.9,1177.6 2159.3,1176.5 2290.7,1176.4 2422.1,1176.4 2553.4,1176.4 2684.8,1176.4" fill="none" stroke="#ec7c71" stroke-width="3" stroke-linejoin="round"/><circle cx="1239.7" cy="1215.6" r="5.6" fill="#ec7c71"/><circle cx="1371.1" cy="1203.9" r="5.6" fill="#ec7c71"/><circle cx="1502.4" cy="1190.8" r="5.6" fill="#ec7c71"/><circle cx="1633.8" cy="1186.9" r="5.6" fill="#ec7c71"/><circle cx="1765.2" cy="1183.5" r="5.6" fill="#ec7c71"/><circle cx="1896.6" cy="1179.6" r="5.6" fill="#ec7c71"/><circle cx="2027.9" cy="1177.6" r="5.6" fill="#ec7c71"/><circle cx="2159.3" cy="1176.5" r="5.6" fill="#ec7c71"/><circle cx="2290.7" cy="1176.4" r="5.6" fill="#ec7c71"/><circle cx="2422.1" cy="1176.4" r="5.6" fill="#ec7c71"/><circle cx="2553.4" cy="1176.4" r="5.6" fill="#ec7c71"/><circle cx="2684.8" cy="1176.4" r="5.6" fill="#ec7c71"/><polyline points="1239.7,1423.9 1371.1,1413.7 1502.4,1402.5 1633.8,1399.6 1765.2,1396.8 1896.6,1393.8 2027.9,1392.3 2159.3,1391.4 2290.7,1391.4 2422.1,1391.4 2553.4,1391.4 2684.8,1391.4" fill="none" stroke="#5d9b41" stroke-width="3" stroke-linejoin="round"/><circle cx="1239.7" cy="1423.9" r="5.6" fill="#5d9b41"/><circle cx="1371.1" cy="1413.7" r="5.6" fill="#5d9b41"/><circle cx="1502.4" cy="1402.5" r="5.6" fill="#5d9b41"/><circle cx="1633.8" cy="1399.6" r="5.6" fill="#5d9b41"/><circle cx="1765.2" cy="1396.8" r="5.6" fill="#5d9b41"/><circle cx="1896.6" cy="1393.8" r="5.6" fill="#5d9b41"/><circle cx="2027.9" cy="1392.3" r="5.6" fill="#5d9b41"/><circle cx="2159.3" cy="1391.4" r="5.6" fill="#5d9b41"/><circle cx="2290.7" cy="1391.4" r="5.6" fill="#5d9b41"/><circle cx="2422.1" cy="1391.4" r="5.6" fill="#5d9b41"/><circle cx="2553.4" cy="1391.4" r="5.6" fill="#5d9b41"/><circle cx="2684.8" cy="1391.4" r="5.6" fill="#5d9b41"/><polyline points="1239.7,1441.6 1371.1,1434.7 1502.4,1434.7 1633.8,1431.7 1765.2,1429.3 1896.6,1426.3 2027.9,1424.9 2159.3,1423.9 2290.7,1423.7 2422.1,1423.0 2553.4,1422.6 2684.8,1422.3" fill="none" stroke="#4a4fd0" stroke-width="3" stroke-linejoin="round"/><circle cx="1239.7" cy="1441.6" r="5.6" fill="#4a4fd0"/><circle cx="1371.1" cy="1434.7" r="5.6" fill="#4a4fd0"/><circle cx="1502.4" cy="1434.7" r="5.6" fill="#4a4fd0"/><circle cx="1633.8" cy="1431.7" r="5.6" fill="#4a4fd0"/><circle cx="1765.2" cy="1429.3" r="5.6" fill="#4a4fd0"/><circle cx="1896.6" cy="1426.3" r="5.6" fill="#4a4fd0"/><circle cx="2027.9" cy="1424.9" r="5.6" fill="#4a4fd0"/><circle cx="2159.3" cy="1423.9" r="5.6" fill="#4a4fd0"/><circle cx="2290.7" cy="1423.7" r="5.6" fill="#4a4fd0"/><circle cx="2422.1" cy="1423.0" r="5.6" fill="#4a4fd0"/><circle cx="2553.4" cy="1422.6" r="5.6" fill="#4a4fd0"/><circle cx="2684.8" cy="1422.3" r="5.6" fill="#4a4fd0"/><line x1="1718.4" y1="1131.3" x2="1763.7" y2="1131.3" stroke="#ec7c71" stroke-width="2.6"/><circle cx="1741.1" cy="1131.3" r="4.2" fill="#ec7c71"/><line x1="1879" y1="1131.3" x2="1925.4" y2="1131.3" stroke="#5d9b41" stroke-width="2.6"/><circle cx="1902.2" cy="1131.3" r="4.2" fill="#5d9b41"/><line x1="2042.3" y1="1131.3" x2="2088.6" y2="1131.3" stroke="#4a4fd0" stroke-width="2.6"/><circle cx="2065.4" cy="1131.3" r="4.2" fill="#4a4fd0"/></svg>
<div class="d" style="left:1066.00px;top:1151.00px;font-size:18px;line-height:18px;color:#000;font-weight:700;transform:scaleX(1.0325);transform-origin:left center;">1,200</div>
<div class="d" style="left:1066.00px;top:1193.00px;font-size:18px;line-height:18px;color:#000;font-weight:700;transform:scaleX(1.0325);transform-origin:left center;">1,000</div>
<div class="d" style="left:1066.00px;top:1236.00px;font-size:18px;line-height:18px;color:#000;font-weight:700;transform:scaleX(1.0495);transform-origin:left center;">800</div>
<div class="d" style="left:1066.00px;top:1278.00px;font-size:18px;line-height:18px;color:#000;font-weight:700;transform:scaleX(1.0495);transform-origin:left center;">600</div>
<div class="d" style="left:1066.00px;top:1320.00px;font-size:18px;line-height:18px;color:#000;font-weight:700;transform:scaleX(1.0495);transform-origin:left center;">400</div>
<div class="d" style="left:1066.00px;top:1362.00px;font-size:18px;line-height:18px;color:#000;font-weight:700;transform:scaleX(1.0495);transform-origin:left center;">200</div>
<div class="d" style="left:1066.00px;top:1404.00px;font-size:18px;line-height:18px;color:#000;font-weight:700;transform:scaleX(1.1832);transform-origin:left center;">-</div>
<div class="d" style="left:1061.00px;top:1446.00px;font-size:18px;line-height:18px;color:#000;font-weight:700;transform:scaleX(1.0793);transform-origin:left center;">(200)</div>
<div class="d" style="left:1061.00px;top:1488.00px;font-size:18px;line-height:18px;color:#000;font-weight:700;transform:scaleX(1.0793);transform-origin:left center;">(400)</div>
<div class="d" style="left:145.26px;top:1512.00px;font-size:18px;line-height:18px;color:#000;font-weight:700;transform:scaleX(1.0428);transform-origin:center center;">2026</div>
<div class="d" style="left:339.86px;top:1512.00px;font-size:18px;line-height:18px;color:#000;font-weight:700;transform:scaleX(1.0428);transform-origin:center center;">2027</div>
<div class="d" style="left:534.46px;top:1512.00px;font-size:18px;line-height:18px;color:#000;font-weight:700;transform:scaleX(1.0428);transform-origin:center center;">2028</div>
<div class="d" style="left:729.06px;top:1512.00px;font-size:18px;line-height:18px;color:#000;font-weight:700;transform:scaleX(1.0428);transform-origin:center center;">2029</div>
<div class="d" style="left:923.66px;top:1512.00px;font-size:18px;line-height:18px;color:#000;font-weight:700;transform:scaleX(1.0428);transform-origin:center center;">2030</div>
<div class="d" style="left:379.00px;top:1123.00px;font-size:18px;line-height:18px;color:#000;font-weight:700;">Revenue</div>
<div class="d" style="left:544.50px;top:1123.00px;font-size:18px;line-height:18px;color:#000;font-weight:700;transform:scaleX(1.0534);transform-origin:left center;">EBITDA</div>
<div class="d" style="left:707.60px;top:1123.00px;font-size:18px;line-height:18px;color:#000;font-weight:700;transform:scaleX(1.0142);transform-origin:left center;">Net Profit After Tax</div>
<div class="d" style="left:2774.40px;top:1152.00px;font-size:18px;line-height:18px;color:#000;font-weight:700;transform:scaleX(1.0495);transform-origin:left center;">5</div>
<div class="d" style="left:2774.40px;top:1219.00px;font-size:18px;line-height:18px;color:#000;font-weight:700;transform:scaleX(1.1832);transform-origin:left center;">-</div>
<div class="d" style="left:2769.40px;top:1286.00px;font-size:18px;line-height:18px;color:#000;font-weight:700;transform:scaleX(1.1052);transform-origin:left center;">(5)</div>
<div class="d" style="left:2769.40px;top:1353.00px;font-size:18px;line-height:18px;color:#000;font-weight:700;transform:scaleX(1.0883);transform-origin:left center;">(10)</div>
<div class="d" style="left:2769.40px;top:1421.00px;font-size:18px;line-height:18px;color:#000;font-weight:700;transform:scaleX(1.0883);transform-origin:left center;">(15)</div>
<div class="d" style="left:2769.40px;top:1488.00px;font-size:18px;line-height:18px;color:#000;font-weight:700;transform:scaleX(1.0883);transform-origin:left center;">(20)</div>
<div class="d" style="left:1226.85px;top:1512.00px;font-size:18px;line-height:18px;color:#000;font-weight:700;transform:scaleX(1.0400);transform-origin:center center;">Jan</div>
<div class="d" style="left:1356.00px;top:1512.00px;font-size:18px;line-height:18px;color:#000;font-weight:700;transform:scaleX(1.0400);transform-origin:center center;">Feb</div>
<div class="d" style="left:1486.32px;top:1512.00px;font-size:18px;line-height:18px;color:#000;font-weight:700;transform:scaleX(1.0400);transform-origin:center center;">Mar</div>
<div class="d" style="left:1619.15px;top:1512.00px;font-size:18px;line-height:18px;color:#000;font-weight:700;transform:scaleX(1.0400);transform-origin:center center;">Apr</div>
<div class="d" style="left:1748.06px;top:1512.00px;font-size:18px;line-height:18px;color:#000;font-weight:700;transform:scaleX(1.0400);transform-origin:center center;">May</div>
<div class="d" style="left:1883.42px;top:1512.00px;font-size:18px;line-height:18px;color:#000;font-weight:700;transform:scaleX(1.0400);transform-origin:center center;">Jun</div>
<div class="d" style="left:2017.79px;top:1512.00px;font-size:18px;line-height:18px;color:#000;font-weight:700;transform:scaleX(1.0400);transform-origin:center center;">Jul</div>
<div class="d" style="left:2142.88px;top:1512.00px;font-size:18px;line-height:18px;color:#000;font-weight:700;transform:scaleX(1.0400);transform-origin:center center;">Aug</div>
<div class="d" style="left:2274.97px;top:1512.00px;font-size:18px;line-height:18px;color:#000;font-weight:700;transform:scaleX(1.0400);transform-origin:center center;">Sep</div>
<div class="d" style="left:2407.91px;top:1512.00px;font-size:18px;line-height:18px;color:#000;font-weight:700;transform:scaleX(1.0400);transform-origin:center center;">Oct</div>
<div class="d" style="left:2537.22px;top:1512.00px;font-size:18px;line-height:18px;color:#000;font-weight:700;transform:scaleX(1.0400);transform-origin:center center;">Nov</div>
<div class="d" style="left:2669.20px;top:1512.00px;font-size:18px;line-height:18px;color:#000;font-weight:700;transform:scaleX(1.0400);transform-origin:center center;">Dec</div>
<div class="d" style="left:1768.60px;top:1123.00px;font-size:18px;line-height:18px;color:#000;font-weight:700;">Revenue</div>
<div class="d" style="left:1935.00px;top:1123.00px;font-size:18px;line-height:18px;color:#000;font-weight:700;transform:scaleX(1.0534);transform-origin:left center;">EBITDA</div>
<div class="d" style="left:2097.30px;top:1123.00px;font-size:18px;line-height:18px;color:#000;font-weight:700;transform:scaleX(1.0142);transform-origin:left center;">Net Profit After Tax</div>
<div style="left:11px;top:278px;width:2880px;height:23px;background:#0b0b0b;"></div>
<svg style="left:28px;top:281px;" width="18" height="18" viewBox="0 0 18 18"><path d="M16.2 1.4 L16.2 16 L1.4 16 Z" fill="#686868"/></svg>
<div style="left:47px;top:278px;width:24px;height:22px;background:#686868;"></div>
<div style="left:47px;top:278px;width:1px;height:21px;background:#8e8e8e;"></div>
<div style="left:70px;top:278px;width:1px;height:21px;background:#a2a2a2;"></div>
<div style="left:47px;top:299px;width:24.6px;height:2px;background:#1f7a48;"></div>
<div style="left:53.46px;top:282.00px;font-size:17.5px;line-height:17.5px;color:#f2f2f2;">A</div>
<div style="left:71px;top:280px;width:1px;height:20px;background:#3c3c3c;"></div>
<div style="left:93.96px;top:282.00px;font-size:17.5px;line-height:17.5px;color:#f2f2f2;">B</div>
<div style="left:128px;top:280px;width:1px;height:20px;background:#3c3c3c;"></div>
<div style="left:150.98px;top:282.00px;font-size:17.5px;line-height:17.5px;color:#f2f2f2;">C</div>
<div style="left:186px;top:280px;width:1px;height:20px;background:#3c3c3c;"></div>
<div style="left:208.98px;top:282.00px;font-size:17.5px;line-height:17.5px;color:#f2f2f2;">D</div>
<div style="left:244px;top:280px;width:1px;height:20px;background:#3c3c3c;"></div>
<div style="left:267.46px;top:282.00px;font-size:17.5px;line-height:17.5px;color:#f2f2f2;">E</div>
<div style="left:302px;top:280px;width:1px;height:20px;background:#3c3c3c;"></div>
<div style="left:325.96px;top:282.00px;font-size:17.5px;line-height:17.5px;color:#f2f2f2;">F</div>
<div style="left:360px;top:280px;width:1px;height:20px;background:#3c3c3c;"></div>
<div style="left:387.49px;top:282.00px;font-size:17.5px;line-height:17.5px;color:#f2f2f2;">G</div>
<div style="left:428px;top:280px;width:1px;height:20px;background:#3c3c3c;"></div>
<div style="left:450.98px;top:282.00px;font-size:17.5px;line-height:17.5px;color:#f2f2f2;">H</div>
<div style="left:486px;top:280px;width:1px;height:20px;background:#3c3c3c;"></div>
<div style="left:513.12px;top:282.00px;font-size:17.5px;line-height:17.5px;color:#f2f2f2;">I</div>
<div style="left:544px;top:280px;width:1px;height:20px;background:#3c3c3c;"></div>
<div style="left:600.42px;top:282.00px;font-size:17.5px;line-height:17.5px;color:#f2f2f2;">J</div>
<div style="left:664px;top:280px;width:1px;height:20px;background:#3c3c3c;"></div>
<div style="left:718.96px;top:282.00px;font-size:17.5px;line-height:17.5px;color:#f2f2f2;">K</div>
<div style="left:784px;top:280px;width:1px;height:20px;background:#3c3c3c;"></div>
<div style="left:839.93px;top:282.00px;font-size:17.5px;line-height:17.5px;color:#f2f2f2;">L</div>
<div style="left:904px;top:280px;width:1px;height:20px;background:#3c3c3c;"></div>
<div style="left:957.51px;top:282.00px;font-size:17.5px;line-height:17.5px;color:#f2f2f2;">M</div>
<div style="left:1024px;top:280px;width:1px;height:20px;background:#3c3c3c;"></div>
<div style="left:1078.48px;top:282.00px;font-size:17.5px;line-height:17.5px;color:#f2f2f2;">N</div>
<div style="left:1144px;top:280px;width:1px;height:20px;background:#3c3c3c;"></div>
<div style="left:1153.49px;top:282.00px;font-size:17.5px;line-height:17.5px;color:#f2f2f2;">O</div>
<div style="left:1175px;top:280px;width:1px;height:20px;background:#3c3c3c;"></div>
<div style="left:1238.46px;top:282.00px;font-size:17.5px;line-height:17.5px;color:#f2f2f2;">P</div>
<div style="left:1312px;top:280px;width:1px;height:20px;background:#3c3c3c;"></div>
<div style="left:1374.49px;top:282.00px;font-size:17.5px;line-height:17.5px;color:#f2f2f2;">Q</div>
<div style="left:1449px;top:280px;width:1px;height:20px;background:#3c3c3c;"></div>
<div style="left:1511.98px;top:282.00px;font-size:17.5px;line-height:17.5px;color:#f2f2f2;">R</div>
<div style="left:1586px;top:280px;width:1px;height:20px;background:#3c3c3c;"></div>
<div style="left:1649.46px;top:282.00px;font-size:17.5px;line-height:17.5px;color:#f2f2f2;">S</div>
<div style="left:1723px;top:280px;width:1px;height:20px;background:#3c3c3c;"></div>
<div style="left:1786.96px;top:282.00px;font-size:17.5px;line-height:17.5px;color:#f2f2f2;">T</div>
<div style="left:1860px;top:280px;width:1px;height:20px;background:#3c3c3c;"></div>
<div style="left:1922.98px;top:282.00px;font-size:17.5px;line-height:17.5px;color:#f2f2f2;">U</div>
<div style="left:1997px;top:280px;width:1px;height:20px;background:#3c3c3c;"></div>
<div style="left:2060.46px;top:282.00px;font-size:17.5px;line-height:17.5px;color:#f2f2f2;">V</div>
<div style="left:2134px;top:280px;width:1px;height:20px;background:#3c3c3c;"></div>
<div style="left:2195.04px;top:282.00px;font-size:17.5px;line-height:17.5px;color:#f2f2f2;">W</div>
<div style="left:2271px;top:280px;width:1px;height:20px;background:#3c3c3c;"></div>
<div style="left:2334.46px;top:282.00px;font-size:17.5px;line-height:17.5px;color:#f2f2f2;">X</div>
<div style="left:2408px;top:280px;width:1px;height:20px;background:#3c3c3c;"></div>
<div style="left:2471.46px;top:282.00px;font-size:17.5px;line-height:17.5px;color:#f2f2f2;">Y</div>
<div style="left:2545px;top:280px;width:1px;height:20px;background:#3c3c3c;"></div>
<div style="left:2608.96px;top:282.00px;font-size:17.5px;line-height:17.5px;color:#f2f2f2;">Z</div>
<div style="left:2682px;top:280px;width:1px;height:20px;background:#3c3c3c;"></div>
<div style="left:2739.63px;top:282.00px;font-size:17.5px;line-height:17.5px;color:#f2f2f2;">AA</div>
<div style="left:2819px;top:280px;width:1px;height:20px;background:#3c3c3c;"></div>
<div style="left:2842px;top:280px;width:1px;height:20px;background:#3c3c3c;"></div>
<div style="left:2821.00px;top:282.00px;font-size:17.5px;line-height:17.5px;color:#f2f2f2;letter-spacing:-0.800px;">AB</div>
<div style="left:2843.50px;top:282.00px;font-size:17.5px;line-height:17.5px;color:#f2f2f2;letter-spacing:-0.800px;width:17px;overflow:hidden;">AC</div>
<div style="left:11px;top:301px;width:36px;height:1369px;background:#0b0b0b;"></div>
<div style="left:11px;top:301px;width:36px;height:37px;background:#686868;"></div>
<div style="left:11px;top:300px;width:35.4px;height:1px;background:#cfcfcf;"></div>
<div style="left:46.4px;top:300.6px;width:1.6px;height:37.8px;background:#1f7a48;"></div>
<div style="left:11px;top:337px;width:36px;height:1px;background:#cfcfcf;"></div>
<div style="left:24.05px;top:319.00px;font-size:17.8px;line-height:17.8px;color:#f7f7f7;transform:scaleX(0.9300);transform-origin:center center;">1</div>
<div style="left:11px;top:371px;width:36px;height:1px;background:#3c3c3c;"></div>
<div style="left:24.05px;top:353.00px;font-size:17.8px;line-height:17.8px;color:#f7f7f7;transform:scaleX(0.9300);transform-origin:center center;">2</div>
<div style="left:11px;top:403px;width:36px;height:1px;background:#3c3c3c;"></div>
<div style="left:24.05px;top:385.00px;font-size:17.8px;line-height:17.8px;color:#f7f7f7;transform:scaleX(0.9300);transform-origin:center center;">3</div>
<div style="left:11px;top:427px;width:36px;height:1px;background:#3c3c3c;"></div>
<div style="left:24.05px;top:409.00px;font-size:17.8px;line-height:17.8px;color:#f7f7f7;transform:scaleX(0.9300);transform-origin:center center;">4</div>
<div style="left:11px;top:463px;width:36px;height:1px;background:#3c3c3c;"></div>
<div style="left:24.05px;top:445.00px;font-size:17.8px;line-height:17.8px;color:#f7f7f7;transform:scaleX(0.9300);transform-origin:center center;">5</div>
<div style="left:11px;top:468px;width:36px;height:1px;background:#3c3c3c;"></div>
<div style="left:11px;top:490px;width:36px;height:1px;background:#3c3c3c;"></div>
<div style="left:24.05px;top:472.00px;font-size:17.8px;line-height:17.8px;color:#f7f7f7;transform:scaleX(0.9300);transform-origin:center center;">7</div>
<div style="left:11px;top:513px;width:36px;height:1px;background:#3c3c3c;"></div>
<div style="left:24.05px;top:495.00px;font-size:17.8px;line-height:17.8px;color:#f7f7f7;transform:scaleX(0.9300);transform-origin:center center;">8</div>
<div style="left:11px;top:536px;width:36px;height:1px;background:#3c3c3c;"></div>
<div style="left:24.05px;top:518.00px;font-size:17.8px;line-height:17.8px;color:#f7f7f7;transform:scaleX(0.9300);transform-origin:center center;">9</div>
<div style="left:11px;top:559px;width:36px;height:1px;background:#3c3c3c;"></div>
<div style="left:19.10px;top:541.00px;font-size:17.8px;line-height:17.8px;color:#f7f7f7;transform:scaleX(0.9300);transform-origin:center center;">10</div>
<div style="left:11px;top:582px;width:36px;height:1px;background:#3c3c3c;"></div>
<div style="left:19.76px;top:564.00px;font-size:17.8px;line-height:17.8px;color:#f7f7f7;transform:scaleX(0.9300);transform-origin:center center;">11</div>
<div style="left:11px;top:609px;width:36px;height:1px;background:#3c3c3c;"></div>
<div style="left:19.10px;top:591.00px;font-size:17.8px;line-height:17.8px;color:#f7f7f7;transform:scaleX(0.9300);transform-origin:center center;">12</div>
<div style="left:11px;top:631px;width:36px;height:1px;background:#3c3c3c;"></div>
<div style="left:19.10px;top:613.00px;font-size:17.8px;line-height:17.8px;color:#f7f7f7;transform:scaleX(0.9300);transform-origin:center center;">13</div>
<div style="left:11px;top:654px;width:36px;height:1px;background:#3c3c3c;"></div>
<div style="left:19.10px;top:636.00px;font-size:17.8px;line-height:17.8px;color:#f7f7f7;transform:scaleX(0.9300);transform-origin:center center;">14</div>
<div style="left:11px;top:677px;width:36px;height:1px;background:#3c3c3c;"></div>
<div style="left:19.10px;top:659.00px;font-size:17.8px;line-height:17.8px;color:#f7f7f7;transform:scaleX(0.9300);transform-origin:center center;">15</div>
<div style="left:11px;top:704px;width:36px;height:1px;background:#3c3c3c;"></div>
<div style="left:19.10px;top:686.00px;font-size:17.8px;line-height:17.8px;color:#f7f7f7;transform:scaleX(0.9300);transform-origin:center center;">16</div>
<div style="left:11px;top:727px;width:36px;height:1px;background:#3c3c3c;"></div>
<div style="left:19.10px;top:709.00px;font-size:17.8px;line-height:17.8px;color:#f7f7f7;transform:scaleX(0.9300);transform-origin:center center;">17</div>
<div style="left:11px;top:750px;width:36px;height:1px;background:#3c3c3c;"></div>
<div style="left:19.10px;top:732.00px;font-size:17.8px;line-height:17.8px;color:#f7f7f7;transform:scaleX(0.9300);transform-origin:center center;">18</div>
<div style="left:11px;top:773px;width:36px;height:1px;background:#3c3c3c;"></div>
<div style="left:19.10px;top:755.00px;font-size:17.8px;line-height:17.8px;color:#f7f7f7;transform:scaleX(0.9300);transform-origin:center center;">19</div>
<div style="left:11px;top:777px;width:36px;height:1px;background:#3c3c3c;"></div>
<div style="left:11px;top:800px;width:36px;height:1px;background:#3c3c3c;"></div>
<div style="left:19.10px;top:782.00px;font-size:17.8px;line-height:17.8px;color:#f7f7f7;transform:scaleX(0.9300);transform-origin:center center;">21</div>
<div style="left:11px;top:823px;width:36px;height:1px;background:#3c3c3c;"></div>
<div style="left:19.10px;top:805.00px;font-size:17.8px;line-height:17.8px;color:#f7f7f7;transform:scaleX(0.9300);transform-origin:center center;">22</div>
<div style="left:11px;top:828px;width:36px;height:1px;background:#3c3c3c;"></div>
<div style="left:11px;top:855px;width:36px;height:1px;background:#3c3c3c;"></div>
<div style="left:19.10px;top:837.00px;font-size:17.8px;line-height:17.8px;color:#f7f7f7;transform:scaleX(0.9300);transform-origin:center center;">24</div>
<div style="left:11px;top:877px;width:36px;height:1px;background:#3c3c3c;"></div>
<div style="left:19.10px;top:859.00px;font-size:17.8px;line-height:17.8px;color:#f7f7f7;transform:scaleX(0.9300);transform-origin:center center;">25</div>
<div style="left:11px;top:900px;width:36px;height:1px;background:#3c3c3c;"></div>
<div style="left:19.10px;top:882.00px;font-size:17.8px;line-height:17.8px;color:#f7f7f7;transform:scaleX(0.9300);transform-origin:center center;">26</div>
<div style="left:11px;top:923px;width:36px;height:1px;background:#3c3c3c;"></div>
<div style="left:19.10px;top:905.00px;font-size:17.8px;line-height:17.8px;color:#f7f7f7;transform:scaleX(0.9300);transform-origin:center center;">27</div>
<div style="left:11px;top:946px;width:36px;height:1px;background:#3c3c3c;"></div>
<div style="left:19.10px;top:928.00px;font-size:17.8px;line-height:17.8px;color:#f7f7f7;transform:scaleX(0.9300);transform-origin:center center;">28</div>
<div style="left:11px;top:969px;width:36px;height:1px;background:#3c3c3c;"></div>
<div style="left:19.10px;top:951.00px;font-size:17.8px;line-height:17.8px;color:#f7f7f7;transform:scaleX(0.9300);transform-origin:center center;">29</div>
<div style="left:11px;top:992px;width:36px;height:1px;background:#3c3c3c;"></div>
<div style="left:19.10px;top:974.00px;font-size:17.8px;line-height:17.8px;color:#f7f7f7;transform:scaleX(0.9300);transform-origin:center center;">30</div>
<div style="left:11px;top:1019px;width:36px;height:1px;background:#3c3c3c;"></div>
<div style="left:19.10px;top:1001.00px;font-size:17.8px;line-height:17.8px;color:#f7f7f7;transform:scaleX(0.9300);transform-origin:center center;">31</div>
<div style="left:11px;top:1042px;width:36px;height:1px;background:#3c3c3c;"></div>
<div style="left:19.10px;top:1024.00px;font-size:17.8px;line-height:17.8px;color:#f7f7f7;transform:scaleX(0.9300);transform-origin:center center;">32</div>
<div style="left:11px;top:1065px;width:36px;height:1px;background:#3c3c3c;"></div>
<div style="left:19.10px;top:1047.00px;font-size:17.8px;line-height:17.8px;color:#f7f7f7;transform:scaleX(0.9300);transform-origin:center center;">33</div>
<div style="left:11px;top:1101px;width:36px;height:1px;background:#3c3c3c;"></div>
<div style="left:19.10px;top:1083.00px;font-size:17.8px;line-height:17.8px;color:#f7f7f7;transform:scaleX(0.9300);transform-origin:center center;">34</div>
<div style="left:11px;top:1124px;width:36px;height:1px;background:#3c3c3c;"></div>
<div style="left:19.10px;top:1106.00px;font-size:17.8px;line-height:17.8px;color:#f7f7f7;transform:scaleX(0.9300);transform-origin:center center;">35</div>
<div style="left:11px;top:1147px;width:36px;height:1px;background:#3c3c3c;"></div>
<div style="left:19.10px;top:1129.00px;font-size:17.8px;line-height:17.8px;color:#f7f7f7;transform:scaleX(0.9300);transform-origin:center center;">36</div>
<div style="left:11px;top:1170px;width:36px;height:1px;background:#3c3c3c;"></div>
<div style="left:19.10px;top:1152.00px;font-size:17.8px;line-height:17.8px;color:#f7f7f7;transform:scaleX(0.9300);transform-origin:center center;">37</div>
<div style="left:11px;top:1193px;width:36px;height:1px;background:#3c3c3c;"></div>
<div style="left:19.10px;top:1175.00px;font-size:17.8px;line-height:17.8px;color:#f7f7f7;transform:scaleX(0.9300);transform-origin:center center;">38</div>
<div style="left:11px;top:1216px;width:36px;height:1px;background:#3c3c3c;"></div>
<div style="left:19.10px;top:1198.00px;font-size:17.8px;line-height:17.8px;color:#f7f7f7;transform:scaleX(0.9300);transform-origin:center center;">39</div>
<div style="left:11px;top:1239px;width:36px;height:1px;background:#3c3c3c;"></div>
<div style="left:19.10px;top:1221.00px;font-size:17.8px;line-height:17.8px;color:#f7f7f7;transform:scaleX(0.9300);transform-origin:center center;">40</div>
<div style="left:11px;top:1262px;width:36px;height:1px;background:#3c3c3c;"></div>
<div style="left:19.10px;top:1244.00px;font-size:17.8px;line-height:17.8px;color:#f7f7f7;transform:scaleX(0.9300);transform-origin:center center;">41</div>
<div style="left:11px;top:1285px;width:36px;height:1px;background:#3c3c3c;"></div>
<div style="left:19.10px;top:1267.00px;font-size:17.8px;line-height:17.8px;color:#f7f7f7;transform:scaleX(0.9300);transform-origin:center center;">42</div>
<div style="left:11px;top:1308px;width:36px;height:1px;background:#3c3c3c;"></div>
<div style="left:19.10px;top:1290.00px;font-size:17.8px;line-height:17.8px;color:#f7f7f7;transform:scaleX(0.9300);transform-origin:center center;">43</div>
<div style="left:11px;top:1331px;width:36px;height:1px;background:#3c3c3c;"></div>
<div style="left:19.10px;top:1313.00px;font-size:17.8px;line-height:17.8px;color:#f7f7f7;transform:scaleX(0.9300);transform-origin:center center;">44</div>
<div style="left:11px;top:1353px;width:36px;height:1px;background:#3c3c3c;"></div>
<div style="left:19.10px;top:1335.00px;font-size:17.8px;line-height:17.8px;color:#f7f7f7;transform:scaleX(0.9300);transform-origin:center center;">45</div>
<div style="left:11px;top:1376px;width:36px;height:1px;background:#3c3c3c;"></div>
<div style="left:19.10px;top:1358.00px;font-size:17.8px;line-height:17.8px;color:#f7f7f7;transform:scaleX(0.9300);transform-origin:center center;">46</div>
<div style="left:11px;top:1399px;width:36px;height:1px;background:#3c3c3c;"></div>
<div style="left:19.10px;top:1381.00px;font-size:17.8px;line-height:17.8px;color:#f7f7f7;transform:scaleX(0.9300);transform-origin:center center;">47</div>
<div style="left:11px;top:1422px;width:36px;height:1px;background:#3c3c3c;"></div>
<div style="left:19.10px;top:1404.00px;font-size:17.8px;line-height:17.8px;color:#f7f7f7;transform:scaleX(0.9300);transform-origin:center center;">48</div>
<div style="left:11px;top:1445px;width:36px;height:1px;background:#3c3c3c;"></div>
<div style="left:19.10px;top:1427.00px;font-size:17.8px;line-height:17.8px;color:#f7f7f7;transform:scaleX(0.9300);transform-origin:center center;">49</div>
<div style="left:11px;top:1468px;width:36px;height:1px;background:#3c3c3c;"></div>
<div style="left:19.10px;top:1450.00px;font-size:17.8px;line-height:17.8px;color:#f7f7f7;transform:scaleX(0.9300);transform-origin:center center;">50</div>
<div style="left:11px;top:1491px;width:36px;height:1px;background:#3c3c3c;"></div>
<div style="left:19.10px;top:1473.00px;font-size:17.8px;line-height:17.8px;color:#f7f7f7;transform:scaleX(0.9300);transform-origin:center center;">51</div>
<div style="left:11px;top:1514px;width:36px;height:1px;background:#3c3c3c;"></div>
<div style="left:19.10px;top:1496.00px;font-size:17.8px;line-height:17.8px;color:#f7f7f7;transform:scaleX(0.9300);transform-origin:center center;">52</div>
<div style="left:11px;top:1537px;width:36px;height:1px;background:#3c3c3c;"></div>
<div style="left:19.10px;top:1519.00px;font-size:17.8px;line-height:17.8px;color:#f7f7f7;transform:scaleX(0.9300);transform-origin:center center;">53</div>
<div style="left:11px;top:1561px;width:36px;height:1px;background:#3c3c3c;"></div>
<div style="left:19.10px;top:1543.00px;font-size:17.8px;line-height:17.8px;color:#f7f7f7;transform:scaleX(0.9300);transform-origin:center center;">54</div>
<div style="left:11px;top:1597px;width:36px;height:1px;background:#3c3c3c;"></div>
<div style="left:19.10px;top:1579.00px;font-size:17.8px;line-height:17.8px;color:#f7f7f7;transform:scaleX(0.9300);transform-origin:center center;">55</div>
<div style="left:11px;top:1602px;width:36px;height:1px;background:#3c3c3c;"></div>
<div style="left:11px;top:1624px;width:36px;height:1px;background:#3c3c3c;"></div>
<div style="left:19.10px;top:1606.00px;font-size:17.8px;line-height:17.8px;color:#f7f7f7;transform:scaleX(0.9300);transform-origin:center center;">57</div>
<div style="left:11px;top:1629px;width:36px;height:1px;background:#3c3c3c;"></div>
<div style="left:11px;top:1652px;width:36px;height:1px;background:#3c3c3c;"></div>
<div style="left:19.10px;top:1634.00px;font-size:17.8px;line-height:17.8px;color:#f7f7f7;transform:scaleX(0.9300);transform-origin:center center;">59</div>
<div style="left:19.10px;top:1656.00px;font-size:17.8px;line-height:17.8px;color:#f7f7f7;transform:scaleX(0.9300);transform-origin:center center;">60</div></div>
<div style="left:23px;top:128px;width:2856px;height:150px;background:#292929;border-radius:10px;"></div>
<div style="left:52.00px;top:195.00px;font-size:18.6px;line-height:18.6px;color:#6f6f6f;transform:scaleX(0.8410);transform-origin:left center;">Paste</div>
<div style="left:142.50px;top:144.00px;font-size:18.6px;line-height:18.6px;color:#f5f5f5;transform:scaleX(0.9155);transform-origin:left center;">Cut</div>
<div style="left:142.50px;top:183.00px;font-size:18.6px;line-height:18.6px;color:#f5f5f5;transform:scaleX(0.9557);transform-origin:left center;">Copy</div>
<div style="left:142.50px;top:222.00px;font-size:18.6px;line-height:18.6px;color:#f5f5f5;transform:scaleX(0.9308);transform-origin:left center;">Format Painter</div>
<div style="left:109.00px;top:254.00px;font-size:17.2px;line-height:17.2px;color:#ececec;transform:scaleX(0.9236);transform-origin:left center;">Clipboard</div>
<div style="left:295px;top:146px;width:181px;height:36px;background:#292929;border:1px solid #626262;border-radius:6px;box-sizing:border-box;"></div>
<div style="left:479px;top:146px;width:65px;height:36px;background:#292929;border:1px solid #626262;border-radius:6px;box-sizing:border-box;"></div>
<div style="left:298.80px;top:156.00px;font-size:18.6px;line-height:18.6px;color:#f5f5f5;transform:scaleX(0.9490);transform-origin:left center;">Tahoma</div>
<div style="left:482.00px;top:156.00px;font-size:18.6px;line-height:18.6px;color:#f5f5f5;">8</div>
<div style="left:553.80px;top:149.00px;font-size:27.6px;line-height:27.6px;color:#d6d6d6;">A</div>
<div style="left:595.20px;top:154.00px;font-size:21.8px;line-height:21.8px;color:#d6d6d6;">A</div>
<div style="left:307.20px;top:201.00px;font-size:20.6px;line-height:20.6px;color:#d6d6d6;font-weight:700;transform:scaleX(0.88);transform-origin:left center;">B</div>
<div class="s" style="left:348.20px;top:201.00px;font-size:21px;line-height:21px;color:#d6d6d6;font-style:italic;">I</div>
<div style="left:383.60px;top:201.00px;font-size:18.6px;line-height:18.6px;color:#d6d6d6;">U</div>
<div style="left:574.40px;top:198.00px;font-size:22.4px;line-height:22.4px;color:#d6d6d6;">A</div>
<div style="left:430.50px;top:254.00px;font-size:17.2px;line-height:17.2px;color:#ececec;transform:scaleX(0.8862);transform-origin:left center;">Font</div>
<div style="left:685px;top:146px;width:36px;height:36px;background:#3e3e3e;border:1px solid #8e8e8e;border-radius:6px;box-sizing:border-box;"></div>
<div style="left:771.40px;top:156.00px;font-size:14.6px;line-height:14.6px;color:#d6d6d6;transform:rotate(-45deg);transform-origin:8px 10px;">ab</div>
<div style="left:870.40px;top:151.00px;font-size:14.4px;line-height:14.4px;color:#d6d6d6;">ab</div>
<div style="left:870.40px;top:163.00px;font-size:14.4px;line-height:14.4px;color:#d6d6d6;">c</div>
<div style="left:897.50px;top:156.00px;font-size:18.6px;line-height:18.6px;color:#f5f5f5;transform:scaleX(0.9332);transform-origin:left center;">Wrap Text</div>
<div style="left:897.50px;top:204.00px;font-size:18.6px;line-height:18.6px;color:#f5f5f5;transform:scaleX(0.9559);transform-origin:left center;">Merge &amp; Center</div>
<div style="left:810.50px;top:254.00px;font-size:17.2px;line-height:17.2px;color:#ececec;transform:scaleX(0.9348);transform-origin:left center;">Alignment</div>
<div style="left:1096px;top:146px;width:218px;height:36px;background:#292929;border:1px solid #626262;border-radius:6px;box-sizing:border-box;"></div>
<div style="left:1099.60px;top:156.00px;font-size:18.6px;line-height:18.6px;color:#f5f5f5;transform:scaleX(0.8795);transform-origin:left center;">General</div>
<div style="left:1106.60px;top:200.00px;font-size:25.6px;line-height:25.6px;color:#d6d6d6;">$</div>
<div style="left:1163.40px;top:199.00px;font-size:27.6px;line-height:27.6px;color:#d6d6d6;transform:scaleX(0.9372);transform-origin:left center;">%</div>
<div class="s" style="left:1207.40px;top:177.00px;font-size:46px;line-height:46px;color:#d6d6d6;font-weight:700;">,</div>
<div style="left:1256.40px;top:199.00px;font-size:14.6px;line-height:14.6px;color:#d6d6d6;">.0</div>
<div style="left:1248.60px;top:211.00px;font-size:14.6px;line-height:14.6px;color:#d6d6d6;">.00</div>
<div style="left:1287.40px;top:199.00px;font-size:14.6px;line-height:14.6px;color:#d6d6d6;">.00</div>
<div style="left:1294.80px;top:211.00px;font-size:14.6px;line-height:14.6px;color:#d6d6d6;">.0</div>
<div style="left:1163.80px;top:254.00px;font-size:17.2px;line-height:17.2px;color:#ececec;transform:scaleX(0.9154);transform-origin:left center;">Number</div>
<div style="left:1347.60px;top:195.00px;font-size:18.6px;line-height:18.6px;color:#f5f5f5;transform:scaleX(0.9330);transform-origin:left center;">Insert</div>
<div style="left:1409.80px;top:195.00px;font-size:18.6px;line-height:18.6px;color:#f5f5f5;transform:scaleX(0.9114);transform-origin:left center;">Delete</div>
<div style="left:1472.60px;top:193.00px;font-size:18.6px;line-height:18.6px;color:#f5f5f5;transform:scaleX(0.9676);transform-origin:left center;">Format</div>
<div style="left:1418.00px;top:255.00px;font-size:17.2px;line-height:17.2px;color:#ececec;transform:scaleX(0.8501);transform-origin:left center;">Cells</div>
<div style="left:1593.00px;top:144.00px;font-size:18.6px;line-height:18.6px;color:#f5f5f5;transform:scaleX(0.9646);transform-origin:left center;">AutoSum</div>
<div style="left:1593.80px;top:183.00px;font-size:18.6px;line-height:18.6px;color:#f5f5f5;transform:scaleX(0.8081);transform-origin:left center;">Fill</div>
<div style="left:1593.00px;top:222.00px;font-size:18.6px;line-height:18.6px;color:#f5f5f5;transform:scaleX(0.8774);transform-origin:left center;">Clear</div>
<div style="left:1729.60px;top:138.00px;font-size:26px;line-height:26px;color:#4aa3e0;transform:scaleX(0.82);transform-origin:left center;">A</div>
<div style="left:1730.40px;top:160.00px;font-size:26.4px;line-height:26.4px;color:#d6d6d6;transform:scaleX(0.84);transform-origin:left center;">Z</div>
<div style="left:1725.00px;top:193.00px;font-size:18.6px;line-height:18.6px;color:#f5f5f5;transform:scaleX(1.0061);transform-origin:left center;">Sort &amp;</div>
<div style="left:1724.50px;top:217.00px;font-size:18.6px;line-height:18.6px;color:#f5f5f5;transform:scaleX(0.8831);transform-origin:left center;">Filter</div>
<div style="left:1795.60px;top:193.00px;font-size:18.6px;line-height:18.6px;color:#f5f5f5;transform:scaleX(0.9636);transform-origin:left center;">Find &amp;</div>
<div style="left:1790.60px;top:217.00px;font-size:18.6px;line-height:18.6px;color:#f5f5f5;transform:scaleX(0.8589);transform-origin:left center;">Select</div>
<div style="left:1682.00px;top:255.00px;font-size:17.2px;line-height:17.2px;color:#ececec;transform:scaleX(0.9127);transform-origin:left center;">Editing</div>
<div style="left:1885.60px;top:193.00px;font-size:18.6px;line-height:18.6px;color:#f5f5f5;transform:scaleX(0.9831);transform-origin:left center;">Add-ins</div>
<div style="left:1888.00px;top:255.00px;font-size:17.2px;line-height:17.2px;color:#ececec;transform:scaleX(0.9174);transform-origin:left center;">Add-ins</div>
<div style="left:1980.20px;top:193.00px;font-size:18.6px;line-height:18.6px;color:#f5f5f5;transform:scaleX(0.9158);transform-origin:left center;">Analyze</div>
<div style="left:1992.40px;top:217.00px;font-size:18.6px;line-height:18.6px;color:#f5f5f5;transform:scaleX(0.9316);transform-origin:left center;">Data</div>
<div style="left:2156px;top:142.4px;width:113px;height:113px;background:#fff;border-radius:50%;"></div>
<div class="v" style="left:0;top:0;color:#fff;font-weight:700;"><span style="position:absolute;left:2293.60px;top:158.00px;font-size:47.2px;line-height:47.2px;transform:scaleX(0.8835);transform-origin:left center;">FINM</span><span style="position:absolute;left:2413.60px;top:158.00px;font-size:47.2px;line-height:47.2px;transform:scaleX(0.8773);transform-origin:left center;">O</span><span style="position:absolute;left:2449.80px;top:158.00px;font-size:47.2px;line-height:47.2px;transform:scaleX(0.8552);transform-origin:left center;">DELSLAB</span></div>
<div style="left:2295.00px;top:208.00px;font-size:35.6px;line-height:35.6px;color:#fff;letter-spacing:24.343px;">Templates</div>
<div style="left:2860px;top:278px;width:31px;height:1392px;background:#0b0b0b;"></div>
<div style="left:2861px;top:279px;width:27.5px;height:1390px;background:#1b1b1b;border-radius:13.5px;"></div>
<div style="left:2870px;top:304.6px;width:12px;height:528.6px;background:#9c9c9c;border-radius:6px;"></div>
<div style="left:11px;top:1670px;width:2880px;height:48px;background:#0b0b0b;"></div>
<div style="left:190.50px;top:1686.00px;font-size:21.4px;line-height:21.4px;color:#f5f5f5;transform:scaleX(0.9574);transform-origin:left center;">Contents</div>
<div style="left:292px;top:1680.5px;width:1px;height:27px;background:#5c5c5c;"></div>
<div style="left:433px;top:1680.5px;width:1px;height:27px;background:#5c5c5c;"></div>
<div style="left:552px;top:1680.5px;width:1px;height:27px;background:#5c5c5c;"></div>
<div style="left:723px;top:1680.5px;width:1px;height:27px;background:#5c5c5c;"></div>
<div style="left:825px;top:1680.5px;width:1px;height:27px;background:#5c5c5c;"></div>
<div style="left:925px;top:1680.5px;width:1px;height:27px;background:#5c5c5c;"></div>
<div style="left:1051px;top:1680.5px;width:1px;height:27px;background:#5c5c5c;"></div>
<div style="left:1154px;top:1680.5px;width:1px;height:27px;background:#5c5c5c;"></div>
<div style="left:1209px;top:1680.5px;width:1px;height:27px;background:#5c5c5c;"></div>
<div style="left:1270px;top:1680.5px;width:1px;height:27px;background:#5c5c5c;"></div>
<div style="left:1331px;top:1680.5px;width:1px;height:27px;background:#5c5c5c;"></div>
<div style="left:1459px;top:1680.5px;width:1px;height:27px;background:#5c5c5c;"></div>
<div style="left:1587px;top:1680.5px;width:1px;height:27px;background:#5c5c5c;"></div>
<div style="left:1714px;top:1680.5px;width:1px;height:27px;background:#5c5c5c;"></div>
<div style="left:1775px;top:1680.5px;width:1px;height:27px;background:#5c5c5c;"></div>
<div style="left:1860px;top:1680.5px;width:1px;height:27px;background:#5c5c5c;"></div>
<div style="left:1958px;top:1680.5px;width:1px;height:27px;background:#5c5c5c;"></div>
<div style="left:2035px;top:1680.5px;width:1px;height:27px;background:#5c5c5c;"></div>
<div style="left:299.25px;top:1676px;width:127.75px;height:36px;background:#fff066;border-radius:6px;"></div>
<div style="left:313.75px;top:1686.00px;font-size:21.4px;line-height:21.4px;color:#111;transform:scaleX(0.9480);transform-origin:left center;">Dashboard</div>
<div style="left:440px;top:1676px;width:105.75px;height:36px;background:#fff066;border-radius:6px;"></div>
<div style="left:455.00px;top:1686.00px;font-size:21.4px;line-height:21.4px;color:#111;transform:scaleX(0.9047);transform-origin:left center;">Revenue</div>
<div style="left:559.25px;top:1676px;width:157.5px;height:36px;background:#fff066;border-radius:6px;"></div>
<div style="left:572.50px;top:1686.00px;font-size:21.4px;line-height:21.4px;color:#111;transform:scaleX(0.8913);transform-origin:left center;">COGS &amp; OPEX</div>
<div style="left:730px;top:1676px;width:89px;height:36px;background:#fff066;border-radius:6px;"></div>
<div style="left:743.75px;top:1686.00px;font-size:21.4px;line-height:21.4px;color:#111;transform:scaleX(0.9364);transform-origin:left center;">Payroll</div>
<div style="left:832px;top:1676px;width:87px;height:36px;background:#fff066;border-radius:6px;"></div>
<div style="left:845.50px;top:1686.00px;font-size:21.4px;line-height:21.4px;color:#111;transform:scaleX(0.8305);transform-origin:left center;">CAPEX</div>
<div style="left:932px;top:1676px;width:113px;height:36px;background:#fff066;border-radius:6px;"></div>
<div style="left:945.50px;top:1686.00px;font-size:21.4px;line-height:21.4px;color:#111;transform:scaleX(0.9456);transform-origin:left center;">CapTable</div>
<div style="left:1058px;top:1676px;width:90px;height:36px;background:#fff066;border-radius:6px;"></div>
<div style="left:1071.00px;top:1686.00px;font-size:21.4px;line-height:21.4px;color:#111;transform:scaleX(0.9533);transform-origin:left center;">Capital</div>
<div style="left:1161px;top:1676px;width:42px;height:36px;background:#4db3e8;border-radius:6px;"></div>
<div style="left:1175.00px;top:1686.00px;font-size:21.4px;line-height:21.4px;color:#111;transform:scaleX(0.7419);transform-origin:left center;">IS</div>
<div style="left:1216px;top:1676px;width:48px;height:36px;background:#4db3e8;border-radius:6px;"></div>
<div style="left:1229.00px;top:1686.00px;font-size:21.4px;line-height:21.4px;color:#111;transform:scaleX(0.7975);transform-origin:left center;">CF</div>
<div style="left:1277px;top:1676px;width:48px;height:36px;background:#4db3e8;border-radius:6px;"></div>
<div style="left:1290.50px;top:1686.00px;font-size:21.4px;line-height:21.4px;color:#111;transform:scaleX(0.7706);transform-origin:left center;">BS</div>
<div style="left:1338px;top:1676px;width:115px;height:36px;background:#4db3e8;border-radius:6px;"></div>
<div style="left:1351.75px;top:1686.00px;font-size:21.4px;line-height:21.4px;color:#111;transform:scaleX(0.9064);transform-origin:left center;">Scenarios</div>
<div style="left:1466px;top:1676px;width:115px;height:36px;background:#4db3e8;border-radius:6px;"></div>
<div style="left:1479.50px;top:1686.00px;font-size:21.4px;line-height:21.4px;color:#111;transform:scaleX(0.9955);transform-origin:left center;">Valuation</div>
<div style="left:1721px;top:1676px;width:48px;height:36px;background:#4db3e8;border-radius:6px;"></div>
<div style="left:1735.00px;top:1686.00px;font-size:21.4px;line-height:21.4px;color:#111;transform:scaleX(0.7356);transform-origin:left center;">BE</div>
<div style="left:1782px;top:1676px;width:71.75px;height:36px;background:#4db3e8;border-radius:6px;"></div>
<div style="left:1796.00px;top:1686.00px;font-size:21.4px;line-height:21.4px;color:#111;transform:scaleX(0.8411);transform-origin:left center;">ROIC</div>
<div style="left:1867px;top:1676px;width:85px;height:36px;background:#4db3e8;border-radius:6px;"></div>
<div style="left:1880.50px;top:1686.00px;font-size:21.4px;line-height:21.4px;color:#111;transform:scaleX(0.9123);transform-origin:left center;">Charts</div>
<div style="left:1965px;top:1676px;width:64px;height:36px;background:#4db3e8;border-radius:6px;"></div>
<div style="left:1978.75px;top:1686.00px;font-size:21.4px;line-height:21.4px;color:#111;transform:scaleX(0.8132);transform-origin:left center;">KPIs</div>
<div style="left:2042px;top:1676px;width:30px;height:36px;background:#4db3e8;border-radius:6px 0 0 6px;"></div>
<div style="left:2054.50px;top:1686.00px;font-size:21.4px;line-height:21.4px;color:#111;width:17.5px;overflow:hidden;height:26px;">Sc</div>
<div style="left:1594px;top:1670px;width:114px;height:42px;background:linear-gradient(#fff 0%,#f4f9fd 30%,#cde4f5 100%);border-radius:0 0 7px 7px;"></div>
<div style="left:1588px;top:1670px;width:6px;height:6px;background:radial-gradient(circle at 0 100%, #0b0b0b 5.6px, #fff 6.2px);"></div>
<div style="left:1708px;top:1670px;width:6px;height:6px;background:radial-gradient(circle at 100% 100%, #0b0b0b 5.6px, #fff 6.2px);"></div>
<div style="left:1606.80px;top:1681.00px;font-size:21.4px;line-height:21.4px;color:#1a1a1a;transform:scaleX(0.9721);transform-origin:left center;">Summary</div>
<div style="left:1606px;top:1705.4px;width:90px;height:2.6px;background:#1e8e4e;"></div>
<div style="left:2216px;top:1680px;width:643px;height:28px;background:#1b1b1b;border-radius:14px;"></div>
<div style="left:2242px;top:1687px;width:537px;height:12.4px;background:#9c9c9c;border-radius:6.2px;"></div>
<div style="left:11px;top:1718px;width:2880px;height:33px;background:#161616;"></div>
<div style="left:11px;top:1718px;width:2880px;height:1px;background:#353535;"></div>
<div style="left:27.00px;top:1727.00px;font-size:16.4px;line-height:16.4px;color:#f0f0f0;transform:scaleX(0.8965);transform-origin:left center;">Ready</div>
<div style="left:173.00px;top:1727.00px;font-size:16.4px;line-height:16.4px;color:#f5f5f5;font-weight:700;transform:scaleX(0.9573);transform-origin:left center;">Accessibility: Investigate</div>
<div style="left:2445px;top:1718px;width:60px;height:33px;background:#2b2b2b;"></div>
<div style="left:2840.60px;top:1727.00px;font-size:16.4px;line-height:16.4px;color:#f0f0f0;transform:scaleX(0.9428);transform-origin:left center;">115%</div>
<svg style="left:0;top:0" width="2902" height="300" viewBox="0 0 2902 300"><defs><clipPath id="xl"><rect x="37.8" y="34.7" width="20.3" height="24.4" rx="2.6"/></clipPath><linearGradient id="xb" x1="0" y1="0" x2="1" y2="1"><stop offset="0" stop-color="#2f8a35"/><stop offset="1" stop-color="#1f6c27"/></linearGradient></defs><g clip-path="url(#xl)"><rect x="37.8" y="34.7" width="20.3" height="24.4" fill="url(#xb)"/><rect x="37.8" y="34.7" width="9.4" height="8.7" fill="#62d65c"/><rect x="47.2" y="34.7" width="11" height="8.7" fill="#aee86c"/></g><path d="M37.4 43.2 H45.4 Q47.6 43.2 47.6 45.4 V52.8 Q47.6 55 45.4 55 H38.6 L35 52.2 V45.4 Q35 43.2 37.4 43.2 Z" fill="#0f6b3f"/><path d="M344.2 45.5 L349.5 50.9 L354.8 45.5" fill="none" stroke="#f0f0f0" stroke-width="1.7" stroke-linecap="round" stroke-linejoin="round"/><circle cx="2488.6" cy="44" r="6.6" fill="none" stroke="#f0f0f0" stroke-width="1.6"/><path d="M2483.8 48.8 L2476.4 57" stroke="#f0f0f0" stroke-width="1.6" stroke-linecap="round"/><defs><clipPath id="av"><circle cx="2571.1" cy="46.8" r="18"/></clipPath><radialGradient id="fc" cx="0.5" cy="0.45" r="0.6"><stop offset="0" stop-color="#b39a8e"/><stop offset="1" stop-color="#93796e"/></radialGradient></defs><g clip-path="url(#av)"><rect x="2553" y="28" width="37" height="38" fill="#b3d5df"/><rect x="2553" y="28" width="37" height="10.6" fill="#9db3dc"/><rect x="2553" y="36.6" width="37" height="3" fill="#c3d9e6"/><ellipse cx="2571.2" cy="46.4" rx="7.3" ry="10.4" fill="url(#fc)"/><path d="M2555 66 Q2557 58.4 2565.4 57.4 L2571.2 59.6 L2577 57.4 Q2585.6 58.4 2587.4 66 Z" fill="#ddd2c6"/><path d="M2566.4 57 L2571.2 63.6 L2576 57 Q2571.2 59.4 2566.4 57 Z" fill="#a48a7e"/></g><path d="M2635 35.6 H2647.2 L2652.4 42.6 L2641.1 56.4 L2629.8 42.6 Z M2629.8 42.6 H2652.4 M2635 35.6 L2637.4 42.6 L2641.1 56.4 L2644.8 42.6 L2647.2 35.6" fill="none" stroke="#f0f0f0" stroke-width="1.5" stroke-linejoin="round"/><path d="M2703.2 45.6 H2718.8" stroke="#f0f0f0" stroke-width="1.6"/><rect x="2775.7" y="43" width="11.4" height="11.2" rx="2.4" fill="none" stroke="#f0f0f0" stroke-width="1.6"/><path d="M2779.2 40.1 H2786.6 a3.6 3.6 0 0 1 3.6 3.6 V51" fill="none" stroke="#f0f0f0" stroke-width="1.6"/><path d="M2847.6 39.6 L2862.6 54.6 M2862.6 39.6 L2847.6 54.6" stroke="#f0f0f0" stroke-width="1.7"/><path d="M2629.7 98 H2644.2 V108.6 H2635.4 L2631.8 112.2 V108.6 H2629.7 Z" fill="none" stroke="#f0f0f0" stroke-width="1.5" stroke-linejoin="round"/><path d="M2776 104 V111.8 H2790 V108.4" fill="none" stroke="#0c2c17" stroke-width="1.5" stroke-linejoin="round"/><path d="M2779 107.2 C2779.6 102.6 2782.6 100.4 2786 100.2 V97.2 L2791.6 102 L2786 106.8 V103.8 C2783.2 103.8 2780.8 104.6 2779 107.2 Z" fill="none" stroke="#0c2c17" stroke-width="1.5" stroke-linejoin="round"/><path d="M2858.0 102.7 L2862.2 106.9 L2866.4 102.7" fill="none" stroke="#0c2c17" stroke-width="1.7" stroke-linecap="round" stroke-linejoin="round"/><path d="M62 148.8 H56.6 V181.6 H74.6" fill="none" stroke="#8d8d8d" stroke-width="3"/><path d="M80.6 148.8 H85.6 V158.6" fill="none" stroke="#8d8d8d" stroke-width="3"/><path d="M62.6 150.6 V145.6 H67.2 A4.2 4.2 0 0 1 75.4 145.6 H80 V150.6 Z" fill="none" stroke="#8d8d8d" stroke-width="1.7"/><rect x="76.2" y="160.2" width="19" height="24.6" fill="#292929" stroke="#a9a9a9" stroke-width="1.7"/><path d="M66.9 224.8 L71.2 229.2 L75.5 224.8" fill="none" stroke="#5f5f5f" stroke-width="1.8" stroke-linecap="round" stroke-linejoin="round"/><path d="M119.6 140.4 L127.2 157.4 M128.6 140.4 L121 157.4" stroke="#e6e6e6" stroke-width="1.5" stroke-linecap="round"/><circle cx="118.9" cy="160.6" r="2.5" fill="none" stroke="#4aa3e0" stroke-width="1.7"/><circle cx="128.6" cy="160.6" r="2.5" fill="none" stroke="#4aa3e0" stroke-width="1.7"/><path d="M120.6 197.8 H112.9 V180.2 H120 L123.6 183.8" fill="none" stroke="#d6d6d6" stroke-width="1.6"/><path d="M122 185.6 H129.2 L135 191.4 V202.2 H122 Z M129.2 185.6 V191.4 H135" fill="none" stroke="#d6d6d6" stroke-width="1.6" stroke-linejoin="round"/><path d="M125.2 194.6 H132 M125.2 198 H132" stroke="#d6d6d6" stroke-width="1.4"/><path d="M211.5 190.0 L215.2 193.7 L218.9 190.0" fill="none" stroke="#f0f0f0" stroke-width="1.8" stroke-linecap="round" stroke-linejoin="round"/><path d="M134.6 219.4 L127.6 226.6" stroke="#d6d6d6" stroke-width="3.4" stroke-linecap="round"/><path d="M124.4 222.4 L131.6 229.8 L128 233.4 L120.6 226.2 Z" fill="#292929" stroke="#d6d6d6" stroke-width="1.5" stroke-linejoin="round"/><path d="M120.6 226.2 L113 229.4 L123 239.4 L128 233.4 Z" fill="none" stroke="#f2b84b" stroke-width="1.6" stroke-linejoin="round"/><path d="M118.4 234.8 L124.4 233.8 L125.6 236.4 L123 239.4 Z" fill="#f2a93b"/><path d="M266.0 266.2 V258.0 H274.2" fill="none" stroke="#d6d6d6" stroke-width="1.6"/><path d="M269.2 261.2 L275.8 267.8 M276.2 262.0 V268.2 H270.0" fill="none" stroke="#d6d6d6" stroke-width="1.6"/><rect x="282" y="135" width="1" height="134" fill="#4f4f4f"/><path d="M463.7 162.8 L467.4 166.4 L471.1 162.8" fill="none" stroke="#f0f0f0" stroke-width="1.8" stroke-linecap="round" stroke-linejoin="round"/><path d="M531.5 162.8 L535.2 166.4 L538.9 162.8" fill="none" stroke="#f0f0f0" stroke-width="1.8" stroke-linecap="round" stroke-linejoin="round"/><path d="M570.4 157.4 L573.6 154 L576.8 157.4" fill="none" stroke="#4aa3e0" stroke-width="1.8"/><path d="M608.8 154.2 L612 157.6 L615.2 154.2" fill="none" stroke="#4aa3e0" stroke-width="1.8"/><rect x="383.3" y="219.4" width="13.5" height="1.8" fill="#d6d6d6"/><path d="M415.5 210.6 L419.2 214.2 L422.9 210.6" fill="none" stroke="#f0f0f0" stroke-width="1.8" stroke-linecap="round" stroke-linejoin="round"/><rect x="434" y="193.5" width="1" height="37.0" fill="#4f4f4f"/><rect x="445" y="201" width="21.2" height="18.2" fill="none" stroke="#d6d6d6" stroke-width="1.7" stroke-dasharray="1.7 1.75"/><path d="M455.6 201 V219.2 M445 210.4 H466.2" stroke="#d6d6d6" stroke-width="1.5" stroke-dasharray="1.7 1.75"/><rect x="444.1" y="221" width="23" height="1.8" fill="#f0f0f0"/><path d="M480.7 210.6 L484.4 214.2 L488.1 210.6" fill="none" stroke="#f0f0f0" stroke-width="1.8" stroke-linecap="round" stroke-linejoin="round"/><rect x="499" y="193.5" width="1" height="37.0" fill="#4f4f4f"/><path d="M520.6 201.6 L529.8 210.4 L521.6 216.8 L513.8 209 Z" fill="none" stroke="#d6d6d6" stroke-width="1.6" stroke-linejoin="round"/><path d="M521.4 203.6 V200.8 a2 2 0 0 1 4 0 V206" fill="none" stroke="#d6d6d6" stroke-width="1.4"/><path d="M527.4 206.4 Q531.6 207.6 531 214 Q529.4 210.2 527 209.6 Z" fill="#4aa3e0" stroke="#4aa3e0" stroke-width="1"/><rect x="508.8" y="218" width="24.4" height="6" fill="#ffff00"/><path d="M545.7 210.6 L549.4 214.2 L553.1 210.6" fill="none" stroke="#f0f0f0" stroke-width="1.8" stroke-linecap="round" stroke-linejoin="round"/><rect x="569.6" y="218" width="24.6" height="6" fill="#ff0000"/><path d="M606.5 210.6 L610.2 214.2 L613.9 210.6" fill="none" stroke="#f0f0f0" stroke-width="1.8" stroke-linecap="round" stroke-linejoin="round"/><path d="M616.4 266.2 V258.0 H624.6" fill="none" stroke="#d6d6d6" stroke-width="1.6"/><path d="M619.6 261.2 L626.2 267.8 M626.6 262.0 V268.2 H620.4" fill="none" stroke="#d6d6d6" stroke-width="1.6"/><rect x="633" y="135" width="1" height="134" fill="#4f4f4f"/><rect x="653.0" y="151.95" width="22" height="1.7" fill="#d6d6d6"/><rect x="657.5" y="157.75" width="13" height="1.7" fill="#d6d6d6"/><rect x="653.0" y="163.75" width="22" height="1.7" fill="#d6d6d6"/><rect x="692.0" y="156.75" width="22" height="1.7" fill="#d6d6d6"/><rect x="696.5" y="162.55" width="13" height="1.7" fill="#d6d6d6"/><rect x="692.0" y="168.35" width="22" height="1.7" fill="#d6d6d6"/><rect x="731.0" y="162.15" width="22" height="1.7" fill="#d6d6d6"/><rect x="735.5" y="167.95" width="13" height="1.7" fill="#d6d6d6"/><rect x="731.0" y="173.75" width="22" height="1.7" fill="#d6d6d6"/><rect x="762.8" y="146" width="1" height="36" fill="#4f4f4f"/><path d="M781.4 173.8 L796.4 158.8 M789.6 158.4 H796.8 V165.6" fill="none" stroke="#4aa3e0" stroke-width="1.8"/><path d="M806.5 162.8 L810.2 166.4 L813.9 162.8" fill="none" stroke="#f0f0f0" stroke-width="1.8" stroke-linecap="round" stroke-linejoin="round"/><rect x="850.7" y="144" width="1" height="93.5" fill="#4f4f4f"/><path d="M887.4 166.4 H888.6 a3 3 0 0 1 0 6.6 H880.4 M884 169.4 L880.2 173 L884 176.6" fill="none" stroke="#4aa3e0" stroke-width="1.7"/><rect x="653.0" y="201.35" width="22" height="1.7" fill="#d6d6d6"/><rect x="653.0" y="207.35" width="15" height="1.7" fill="#d6d6d6"/><rect x="653.0" y="213.35" width="22" height="1.7" fill="#d6d6d6"/><rect x="653.0" y="219.55" width="15" height="1.7" fill="#d6d6d6"/><rect x="692.0" y="201.35" width="22" height="1.7" fill="#d6d6d6"/><rect x="695.5" y="207.35" width="15" height="1.7" fill="#d6d6d6"/><rect x="692.0" y="213.35" width="22" height="1.7" fill="#d6d6d6"/><rect x="695.5" y="219.55" width="15" height="1.7" fill="#d6d6d6"/><rect x="731.0" y="201.35" width="22" height="1.7" fill="#d6d6d6"/><rect x="738.0" y="207.35" width="15" height="1.7" fill="#d6d6d6"/><rect x="731.0" y="213.35" width="22" height="1.7" fill="#d6d6d6"/><rect x="738.0" y="219.55" width="15" height="1.7" fill="#d6d6d6"/><rect x="762.8" y="193.5" width="1" height="37.0" fill="#4f4f4f"/><rect x="774.0" y="201.35" width="22" height="1.7" fill="#d6d6d6"/><rect x="774.0" y="219.55" width="22" height="1.7" fill="#d6d6d6"/><rect x="786.0" y="207.35" width="10" height="1.7" fill="#d6d6d6"/><rect x="786.0" y="213.35" width="10" height="1.7" fill="#d6d6d6"/><path d="M783 211.2 H775 M778.4 207.6 L774.8 211.2 L778.4 214.8" fill="none" stroke="#4aa3e0" stroke-width="1.7"/><rect x="813.0" y="201.35" width="22" height="1.7" fill="#d6d6d6"/><rect x="813.0" y="219.55" width="22" height="1.7" fill="#d6d6d6"/><rect x="825.0" y="207.35" width="10" height="1.7" fill="#d6d6d6"/><rect x="825.0" y="213.35" width="10" height="1.7" fill="#d6d6d6"/><path d="M813 211.2 H821 M817.6 207.6 L821.2 211.2 L817.6 214.8" fill="none" stroke="#4aa3e0" stroke-width="1.7"/><rect x="867.8" y="200.8" width="21.4" height="21" fill="none" stroke="#d6d6d6" stroke-width="1.6"/><path d="M878.5 200.8 V204.6 M878.5 218 V221.8" stroke="#d6d6d6" stroke-width="1.5"/><rect x="867.8" y="204.6" width="21.4" height="13.4" fill="none" stroke="#4aa3e0" stroke-width="1.8"/><path d="M871.4 211.3 H885.6 M874.4 208.2 L871.2 211.3 L874.4 214.4 M882.6 208.2 L885.8 211.3 L882.6 214.4" fill="none" stroke="#4aa3e0" stroke-width="1.6"/><path d="M1050.7 210.6 L1054.4 214.2 L1058.1 210.6" fill="none" stroke="#f0f0f0" stroke-width="1.8" stroke-linecap="round" stroke-linejoin="round"/><path d="M1066.6 266.2 V258.0 H1074.8" fill="none" stroke="#d6d6d6" stroke-width="1.6"/><path d="M1069.8 261.2 L1076.4 267.8 M1076.8 262.0 V268.2 H1070.6" fill="none" stroke="#d6d6d6" stroke-width="1.6"/><rect x="1083.3" y="135" width="1" height="134" fill="#4f4f4f"/><path d="M1301.7 162.8 L1305.4 166.4 L1309.1 162.8" fill="none" stroke="#f0f0f0" stroke-width="1.8" stroke-linecap="round" stroke-linejoin="round"/><path d="M1138.7 210.6 L1142.4 214.2 L1146.1 210.6" fill="none" stroke="#f0f0f0" stroke-width="1.8" stroke-linecap="round" stroke-linejoin="round"/><rect x="1234.8" y="193.5" width="1" height="37.0" fill="#4f4f4f"/><path d="M1257 206.4 H1246.4 M1250.4 202.4 L1246.2 206.4 L1250.4 210.4" fill="none" stroke="#4aa3e0" stroke-width="1.7"/><path d="M1284.4 218 H1295.6 M1291.6 214 L1295.8 218 L1291.6 222" fill="none" stroke="#4aa3e0" stroke-width="1.7"/><path d="M1309.0 266.2 V258.0 H1317.2" fill="none" stroke="#d6d6d6" stroke-width="1.6"/><path d="M1312.2 261.2 L1318.8 267.8 M1319.2 262.0 V268.2 H1313.0" fill="none" stroke="#d6d6d6" stroke-width="1.6"/><rect x="1325.3" y="135" width="1" height="134" fill="#4f4f4f"/><rect x="1348.6" y="145.8" width="40.8" height="32.2" fill="none" stroke="#c9c9c9" stroke-width="1.6"/><path d="M1362.6 145.8 V178.0" stroke="#c9c9c9" stroke-width="1.6"/><path d="M1376.8 145.8 V178.0" stroke="#c9c9c9" stroke-width="1.6"/><path d="M1348.6 156.6 H1389.3999999999999" stroke="#c9c9c9" stroke-width="1.6"/><path d="M1348.6 167.4 H1389.3999999999999" stroke="#c9c9c9" stroke-width="1.6"/><rect x="1355.6" y="156.6" width="37.6" height="10.8" fill="#1373cf" stroke="#5db2ee" stroke-width="1.4"/><path d="M1376.8 156.6 V167.4" stroke="#5db2ee" stroke-width="1.4"/><path d="M1364.4 162 H1346.4 M1353.6 154.6 L1346 162 L1353.6 169.4" fill="none" stroke="#5db2ee" stroke-width="1.9"/><path d="M1364.3 225.0 L1368.0 228.7 L1371.7 225.0" fill="none" stroke="#f0f0f0" stroke-width="1.8" stroke-linecap="round" stroke-linejoin="round"/><rect x="1413.4" y="145.8" width="40.8" height="32.2" fill="none" stroke="#c9c9c9" stroke-width="1.6"/><path d="M1427.4 145.8 V178.0" stroke="#c9c9c9" stroke-width="1.6"/><path d="M1441.6 145.8 V178.0" stroke="#c9c9c9" stroke-width="1.6"/><path d="M1413.4 156.6 H1454.2" stroke="#c9c9c9" stroke-width="1.6"/><path d="M1413.4 167.4 H1454.2" stroke="#c9c9c9" stroke-width="1.6"/><rect x="1411" y="155.4" width="6" height="13.2" fill="#292929"/><rect x="1448" y="155.4" width="9" height="13.2" fill="#292929"/><path d="M1419 156.6 H1438.6 L1443.8 162 L1438.6 167.4 H1419 Z" fill="#1373cf" stroke="#5db2ee" stroke-width="1.4"/><path d="M1432.4 156.6 V167.4" stroke="#5db2ee" stroke-width="1.4"/><path d="M1440 154.2 L1456 171.6 M1456 154.2 L1440 171.6" stroke="#e5534b" stroke-width="1.9"/><path d="M1429.3 225.0 L1433.0 228.7 L1436.7 225.0" fill="none" stroke="#f0f0f0" stroke-width="1.8" stroke-linecap="round" stroke-linejoin="round"/><rect x="1479.6" y="145.8" width="40.8" height="32.2" fill="none" stroke="#c9c9c9" stroke-width="1.6"/><path d="M1489.8 145.8 V178.0" stroke="#c9c9c9" stroke-width="1.6"/><path d="M1510.4 145.8 V178.0" stroke="#c9c9c9" stroke-width="1.6"/><path d="M1479.6 156.6 H1520.3999999999999" stroke="#c9c9c9" stroke-width="1.6"/><path d="M1479.6 167.4 H1520.3999999999999" stroke="#c9c9c9" stroke-width="1.6"/><rect x="1489.8" y="156.6" width="20.6" height="10.8" fill="#1373cf" stroke="#5db2ee" stroke-width="1.4"/><path d="M1489 140.4 H1511.4 M1489 137.8 V143 M1511.4 137.8 V143" stroke="#5db2ee" stroke-width="1.6"/><path d="M1495.5 223.3 L1499.2 227.0 L1502.9 223.3" fill="none" stroke="#f0f0f0" stroke-width="1.8" stroke-linecap="round" stroke-linejoin="round"/><rect x="1544.1" y="135" width="1" height="134" fill="#4f4f4f"/><path d="M1583 146 V142.2 H1566.4 L1575.6 152.2 L1566.4 162 H1583 V158.2" fill="none" stroke="#d6d6d6" stroke-width="1.7" stroke-linejoin="miter"/><path d="M1695.3 151.2 L1699.0 154.8 L1702.7 151.2" fill="none" stroke="#f0f0f0" stroke-width="1.8" stroke-linecap="round" stroke-linejoin="round"/><rect x="1564" y="181.2" width="22" height="19.2" fill="none" stroke="#d6d6d6" stroke-width="1.6"/><path d="M1564 185.4 H1586" stroke="#d6d6d6" stroke-width="1.4"/><path d="M1564 183.4 H1586" stroke="#d6d6d6" stroke-width="1.2"/><path d="M1574.6 187 V198 M1569.4 193 L1574.6 198.2 L1579.8 193" fill="none" stroke="#4aa3e0" stroke-width="1.8"/><path d="M1620.7 188.3 L1624.4 192.0 L1628.1 188.3" fill="none" stroke="#f0f0f0" stroke-width="1.8" stroke-linecap="round" stroke-linejoin="round"/><path d="M1564.2 231.6 L1577.2 219.4 L1585.8 227.6 L1572.6 240.2 Z" fill="none" stroke="#c872d8" stroke-width="1.7" stroke-linejoin="round"/><path d="M1564.2 231.6 L1568.8 227.4 L1577.2 235.8 L1572.6 240.2 Z" fill="#b23cc4" stroke="#c872d8" stroke-width="1.2" stroke-linejoin="round"/><path d="M1638.7 227.2 L1642.4 230.8 L1646.1 227.2" fill="none" stroke="#f0f0f0" stroke-width="1.8" stroke-linecap="round" stroke-linejoin="round"/><path d="M1748.6 152.4 H1771.8 L1763.4 163.4 V173.6 H1757 V163.4 Z" fill="none" stroke="#d6d6d6" stroke-width="1.7" stroke-linejoin="round"/><path d="M1768.3 221.8 L1772.0 225.4 L1775.7 221.8" fill="none" stroke="#f0f0f0" stroke-width="1.8" stroke-linecap="round" stroke-linejoin="round"/><circle cx="1826.4" cy="156.8" r="15" fill="none" stroke="#d6d6d6" stroke-width="1.7"/><path d="M1815.6 167.6 L1798.8 184" stroke="#d6d6d6" stroke-width="1.8" stroke-linecap="round"/><path d="M1842.3 221.8 L1846.0 225.4 L1849.7 221.8" fill="none" stroke="#f0f0f0" stroke-width="1.8" stroke-linecap="round" stroke-linejoin="round"/><rect x="1868.1" y="135" width="1" height="134" fill="#4f4f4f"/><rect x="1895.8" y="141.8" width="40.6" height="40.6" fill="none" stroke="#c34e25" stroke-width="1.7"/><rect x="1900.6" y="146.6" width="12.8" height="12.8" fill="none" stroke="#c34e25" stroke-width="1.7"/><rect x="1918.8" y="146.6" width="12.8" height="12.8" fill="none" stroke="#c34e25" stroke-width="1.7"/><rect x="1900.6" y="164.8" width="12.8" height="12.8" fill="none" stroke="#c34e25" stroke-width="1.7"/><rect x="1918.8" y="164.8" width="12.8" height="12.8" fill="none" stroke="#c34e25" stroke-width="1.7"/><rect x="1963.1" y="135" width="1" height="134" fill="#4f4f4f"/><rect x="1989.4" y="142.2" width="41" height="40.2" fill="none" stroke="#b9b9b9" stroke-width="1.6"/><path d="M1989.4 150.4 H2030.4 M1989.4 166.2 H2030.4 M1989.4 174.2 H2030.4 M2003 174.2 V182.4 M2016.6 174.2 V182.4" stroke="#8f8f8f" stroke-width="1.4"/><rect x="1989.4" y="142.2" width="41" height="4.8" fill="#8f8f8f"/><circle cx="2009.6" cy="159.4" r="14.2" fill="#292929" stroke="#d6d6d6" stroke-width="1.7"/><rect x="2001.6" y="158.2" width="4.4" height="8" fill="none" stroke="#d6d6d6" stroke-width="1.2"/><rect x="2006.6" y="151.8" width="4.6" height="14.4" fill="#d6d6d6"/><rect x="2011.8" y="155.4" width="4.4" height="10.8" fill="#4aa3e0"/><path d="M2019.6 170 L2030.6 181.6" stroke="#d6d6d6" stroke-width="3.2" stroke-linecap="round"/><rect x="2056.1" y="135" width="1" height="134" fill="#4f4f4f"/><rect x="2181.8" y="172.8" width="61" height="53" fill="#5c64ea"/><rect x="2190" y="181" width="19" height="14.6" fill="#fff"/><rect x="2215.6" y="181" width="19" height="14.6" fill="#fff"/><rect x="2190" y="203" width="19" height="14.6" fill="#fff"/><rect x="2215.6" y="203" width="19" height="14.6" fill="#fff"/><rect x="2411.6" y="150" width="39.4" height="50" fill="#292929"/><circle cx="2431.2" cy="180.4" r="12.9" fill="none" stroke="#fff" stroke-width="8.6"/><rect x="2424.4" y="150" width="13.6" height="34" rx="6.8" fill="#292929"/><rect x="2427.7" y="154.6" width="7" height="27.6" rx="3.5" fill="#fff"/><path d="M2850.7 254.5 L2857.2 260.7 L2863.7 254.5" fill="none" stroke="#f0f0f0" stroke-width="1.8" stroke-linecap="round" stroke-linejoin="round"/></svg>
<svg style="left:0;top:0" width="2902" height="1762" viewBox="0 0 2902 1762"><path d="M2876 286.4 L2882.6 295.4 H2869.4 Z" fill="#9c9c9c" stroke="#9c9c9c" stroke-width="1" stroke-linejoin="round"/><path d="M2876 1662.6 L2882.6 1653.6 H2869.4 Z" fill="#9c9c9c" stroke="#9c9c9c" stroke-width="1" stroke-linejoin="round"/><path d="M54 1686 L46.8 1693 L54 1700" fill="none" stroke="#8a8a8a" stroke-width="1.7"/><path d="M95.6 1686 L102.8 1693 L95.6 1700" fill="none" stroke="#e4e4e4" stroke-width="1.7"/><circle cx="2089.2" cy="1693" r="2" fill="#e4e4e4"/><circle cx="2095.6" cy="1693" r="2" fill="#e4e4e4"/><circle cx="2102" cy="1693" r="2" fill="#e4e4e4"/><path d="M2135 1693.2 H2152 M2143.5 1684.8 V1701.6" stroke="#e4e4e4" stroke-width="1.7"/><rect x="2190.2" y="1687.4" width="3.4" height="3.2" fill="#e4e4e4"/><rect x="2190.2" y="1693.0" width="3.4" height="3.2" fill="#e4e4e4"/><rect x="2190.2" y="1698.6000000000001" width="3.4" height="3.2" fill="#e4e4e4"/><path d="M2224 1693.2 L2234.2 1687 V1699.4 Z" fill="#9c9c9c"/><path d="M2852 1693.2 L2841.8 1687 V1699.4 Z" fill="#9c9c9c"/><path d="M99.6 1726.6 H120.4 V1734 M99.6 1726.6 V1743.8 H108 M99.6 1730.8 H120.4 M102.6 1734.6 H108.6 M102.6 1738.4 H107" fill="none" stroke="#e4e4e4" stroke-width="1.5"/><circle cx="114.6" cy="1738.6" r="5.6" fill="none" stroke="#e4e4e4" stroke-width="1.5"/><circle cx="114.6" cy="1738.6" r="2.6" fill="#e4e4e4"/><circle cx="155.6" cy="1727.6" r="2.4" fill="none" stroke="#e4e4e4" stroke-width="1.4"/><path d="M147 1729.6 L153 1732.4 H158.2 L164.2 1729.6 M153 1732.4 V1737 L149.6 1744.4 M158.2 1732.4 V1736" fill="none" stroke="#e4e4e4" stroke-width="1.5" stroke-linecap="round" stroke-linejoin="round"/><path d="M157.4 1737.4 L166.6 1745.4 M166.6 1737.4 L157.4 1745.4" stroke="#e4e4e4" stroke-width="1.5"/><rect x="2464.8" y="1724.8" width="18.6" height="18.6" fill="none" stroke="#f0f0f0" stroke-width="1.6"/><path d="M2471 1724.8 V1743.4 M2477.2 1724.8 V1743.4 M2464.8 1731 H2483.4 M2464.8 1737.2 H2483.4" stroke="#f0f0f0" stroke-width="1.6"/><rect x="2524.8" y="1724.8" width="20.4" height="18.6" fill="none" stroke="#f0f0f0" stroke-width="1.6"/><rect x="2529.6" y="1728.8" width="10.8" height="11" fill="none" stroke="#f0f0f0" stroke-width="1.4"/><path d="M2532 1732 H2538 M2532 1734.4 H2538 M2532 1736.8 H2538" stroke="#f0f0f0" stroke-width="1.1"/><path d="M2584.8 1724.8 H2605.2 V1743.4 H2584.8 Z M2584.8 1734.6 H2598.6 V1724.8 M2592 1724.8 V1734.6" fill="none" stroke="#f0f0f0" stroke-width="1.6"/><path d="M2633.2 1734.6 H2644.6" stroke="#e4e4e4" stroke-width="1.4"/><path d="M2653 1734.8 H2801" stroke="#bdbdbd" stroke-width="1.6"/><rect x="2726.6" y="1726.2" width="8.4" height="16.8" rx="2" fill="#c4c4c4"/><path d="M2809 1734.6 H2820.6 M2814.8 1728.8 V1740.4" stroke="#e4e4e4" stroke-width="1.4"/></svg>
<div style="left:37.72px;top:42.00px;font-size:13.6px;line-height:13.6px;color:#fff;font-weight:700;">x</div>
</div></body></html>
